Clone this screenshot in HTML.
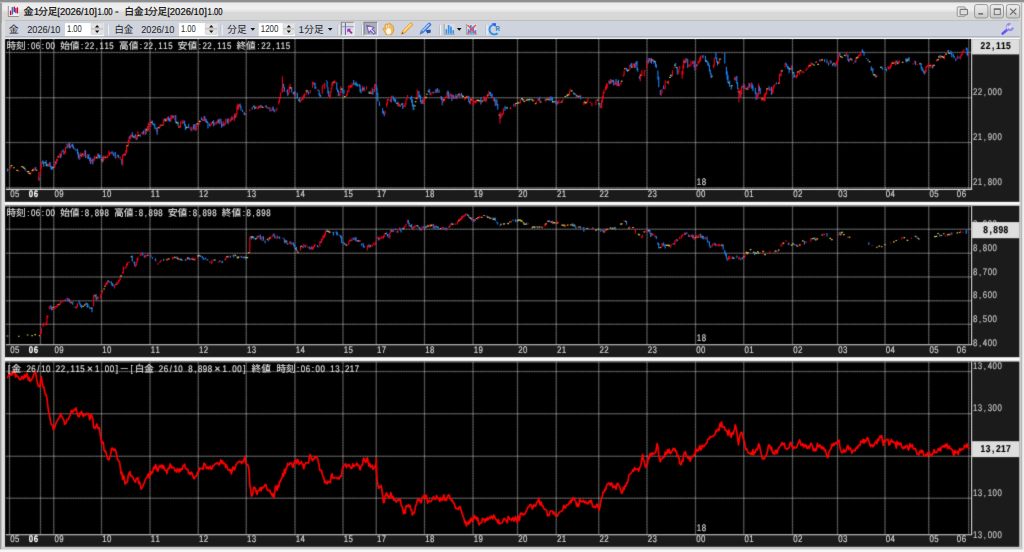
<!DOCTYPE html>
<html lang="ja"><head><meta charset="utf-8"><title>金1分足[2026/10]1.00 - 白金1分足[2026/10]1.00</title>
<style>
html,body{margin:0;padding:0;background:#dcdcdc;overflow:hidden}
body{width:1024px;height:552px;font-family:"Liberation Sans",sans-serif}
svg text{white-space:pre;text-rendering:geometricPrecision}
.cr{stroke:#ff0018;stroke-width:1.05;fill:none}.cb{stroke:#1682f6;stroke-width:1.1;fill:none}.cy{stroke:#d9c850;stroke-width:1.15;fill:none}
</style></head><body>
<svg width="1024" height="552" viewBox="0 0 1024 552" style="display:block">
<defs>
<linearGradient id="gt" x1="0" y1="0" x2="0" y2="1"><stop offset="0" stop-color="#e9e9e9"/><stop offset="0.35" stop-color="#f0f0f0"/><stop offset="0.5" stop-color="#e4e4e4"/><stop offset="0.56" stop-color="#d9d9d9"/><stop offset="1" stop-color="#d6d6d6"/></linearGradient>
<linearGradient id="gb" x1="0" y1="0" x2="0" y2="1"><stop offset="0" stop-color="#efefef"/><stop offset="0.5" stop-color="#dedede"/><stop offset="1" stop-color="#c6c6c6"/></linearGradient>
<linearGradient id="gtop" x1="0" y1="0" x2="0" y2="1"><stop offset="0" stop-color="#8c8e92"/><stop offset="0.55" stop-color="#8f9195"/><stop offset="1" stop-color="#d8d8d8"/></linearGradient>
<linearGradient id="gsep" x1="0" y1="0" x2="0" y2="1"><stop offset="0" stop-color="#f4f4f4"/><stop offset="0.45" stop-color="#ffffff"/><stop offset="1" stop-color="#cfcfcf"/></linearGradient>
<filter id="soft" x="0" y="0" width="100%" height="100%" filterUnits="userSpaceOnUse" color-interpolation-filters="sRGB"><feConvolveMatrix order="3" kernelMatrix="0.015 0.075 0.015 0.075 0.64 0.075 0.015 0.075 0.015" divisor="1" edgeMode="duplicate" preserveAlpha="false"/></filter>
</defs>
<rect x="0" y="0" width="1024" height="552" fill="#dcdcdc"/>
<rect x="0" y="0" width="1.7" height="549.6" fill="#9a9a9a"/>
<rect x="1.7" y="2" width="3.3" height="547.6" fill="#dedede"/>
<rect x="1019.2" y="2" width="1.4" height="547.6" fill="#dcdcdc"/>
<rect x="1020.6" y="2" width="1.8" height="547.6" fill="#b8b8b8"/>
<rect x="1022.4" y="2" width="1.6" height="550" fill="#efefef"/>
<rect x="1.7" y="546.8" width="1020.7" height="2.8" fill="#cdcdcd"/>
<rect x="0" y="549.6" width="1024" height="2.4" fill="#f6f6f6"/>
<rect x="2.6" y="2" width="1018" height="18.6" fill="url(#gt)"/>
<rect x="0" y="0" width="1024" height="2.9" fill="url(#gtop)"/>
<rect x="0" y="2.9" width="1.7" height="20" fill="#9a9a9a"/>
<rect x="5" y="20.2" width="1014.6" height="1" fill="#b9b9b9"/>
<rect x="5" y="21.1" width="1014.6" height="15.6" fill="#cfd3dd"/>
<rect x="5" y="36.4" width="1014.6" height="1.25" fill="#98a0b2"/>
<rect x="5" y="37.65" width="1014.6" height="1.75" fill="#ffffff"/>
<rect x="8.4" y="6" width="10.4" height="10.4" fill="#efefef"/>
<path d="M8.3 5.9V16.5H18.8" fill="none" stroke="#8a8a8a" stroke-width="0.9"/>
<rect x="9.85" y="10.4" width="1.5" height="4.8" rx="0.6" fill="#f0001e"/>
<rect x="11.65" y="7" width="1.5" height="7.6" rx="0.6" fill="#1478e6"/>
<rect x="13.55" y="6.4" width="1.5" height="5.8" rx="0.6" fill="#f0001e"/>
<rect x="15.05" y="8" width="1.5" height="5.2" rx="0.6" fill="#1478e6"/>
<rect x="16.65" y="7.2" width="1.5" height="6.4" rx="0.6" fill="#f0001e"/>
<text x="23.5" y="14.7" font-family="'Liberation Sans','Noto Sans CJK JP',sans-serif" font-size="10" fill="#0a0a0a" stroke="#0a0a0a" stroke-width="0.22">金</text>
<text x="33.8" y="14.7" font-family="Liberation Sans, sans-serif" font-size="10" fill="#0a0a0a" stroke="#0a0a0a" stroke-width="0.22">1</text>
<text x="38.2" y="14.7" font-family="'Liberation Sans','Noto Sans CJK JP',sans-serif" font-size="10" fill="#0a0a0a" stroke="#0a0a0a" stroke-width="0.22" textLength="19" lengthAdjust="spacingAndGlyphs">分足</text>
<text x="57.3" y="14.7" font-family="Liberation Sans, sans-serif" font-size="10" fill="#0a0a0a" textLength="39.6" lengthAdjust="spacingAndGlyphs" stroke="#0a0a0a" stroke-width="0.22">[2026/10]</text>
<text x="97.6" y="14.7" font-family="Liberation Sans, sans-serif" font-size="10" fill="#0a0a0a" textLength="15" lengthAdjust="spacingAndGlyphs" stroke="#0a0a0a" stroke-width="0.22">1.00</text>
<text x="114.9" y="14.7" font-family="Liberation Sans, sans-serif" font-size="11" fill="#0a0a0a" stroke="#0a0a0a" stroke-width="0.22">-</text>
<text x="124.6" y="14.7" font-family="'Liberation Sans','Noto Sans CJK JP',sans-serif" font-size="10" fill="#0a0a0a" stroke="#0a0a0a" stroke-width="0.22" textLength="19" lengthAdjust="spacingAndGlyphs">白金</text>
<text x="143.7" y="14.7" font-family="Liberation Sans, sans-serif" font-size="10" fill="#0a0a0a" stroke="#0a0a0a" stroke-width="0.22">1</text>
<text x="147.9" y="14.7" font-family="'Liberation Sans','Noto Sans CJK JP',sans-serif" font-size="10" fill="#0a0a0a" stroke="#0a0a0a" stroke-width="0.22" textLength="19" lengthAdjust="spacingAndGlyphs">分足</text>
<text x="167.2" y="14.7" font-family="Liberation Sans, sans-serif" font-size="10" fill="#0a0a0a" textLength="39.6" lengthAdjust="spacingAndGlyphs" stroke="#0a0a0a" stroke-width="0.22">[2026/10]</text>
<text x="207.6" y="14.7" font-family="Liberation Sans, sans-serif" font-size="10" fill="#0a0a0a" textLength="15" lengthAdjust="spacingAndGlyphs" stroke="#0a0a0a" stroke-width="0.22">1.00</text>
<rect x="957.2" y="6.9" width="8" height="9.4" rx="0.8" fill="#e6e6e6" stroke="#8c8c8c" stroke-width="0.9"/>
<rect x="960.1" y="9.4" width="7.4" height="5.4" rx="0.8" fill="#dcdcdc" stroke="#7d7d7d" stroke-width="1.1"/>
<rect x="974.6" y="4.6" width="13.3" height="13.4" rx="2.2" fill="url(#gb)" stroke="#989898" stroke-width="1"/>
<rect x="990.2" y="4.6" width="13.3" height="13.4" rx="2.2" fill="url(#gb)" stroke="#989898" stroke-width="1"/>
<rect x="1006.4" y="4.6" width="13.3" height="13.4" rx="2.2" fill="url(#gb)" stroke="#989898" stroke-width="1"/>
<rect x="978.3" y="13.1" width="4.8" height="1.5" fill="#686868"/>
<rect x="994.3" y="9" width="6" height="5.6" fill="none" stroke="#777" stroke-width="1"/>
<rect x="993.9" y="8.4" width="6.8" height="1.6" fill="#777"/>
<path d="M1010.2 8.6L1016.3 14.6M1016.3 8.6L1010.2 14.6" stroke="#6a6a6a" stroke-width="1.3" fill="none"/>
<text x="8.7" y="33.4" font-family="'Liberation Sans','Noto Sans CJK JP',sans-serif" font-size="10" fill="#1c1c1c">金</text>
<text x="27.2" y="32.6" font-family="Liberation Sans, sans-serif" font-size="10" fill="#1c1c1c" textLength="33.2" lengthAdjust="spacingAndGlyphs">2026/10</text>
<rect x="65" y="22.7" width="38.7" height="13.4" fill="#ffffff"/>
<rect x="65" y="22.4" width="38.7" height="0.7" fill="#c3c8d2"/>
<text x="67" y="31.7" font-family="Liberation Sans, sans-serif" font-size="10" fill="#2a2a2a" textLength="14.8" lengthAdjust="spacingAndGlyphs">1.00</text>
<rect x="91.2" y="23.2" width="11.9" height="11.2" rx="1" fill="#e3e3e3" stroke="#c8c8c8" stroke-width="0.6"/>
<rect x="91.2" y="28.5" width="11.9" height="0.8" fill="#a8a8a8"/>
<path d="M94.95 27.4L97.15 24.9L99.35 27.4Z" fill="#111"/>
<path d="M94.95 30.6L97.15 33.1L99.35 30.6Z" fill="#111"/>
<rect x="106.8" y="24.8" width="0.9" height="10.4" fill="#b4b9c6"/>
<rect x="107.7" y="24.8" width="1.3" height="10.4" fill="#eef0f5"/>
<text x="114.4" y="33.4" font-family="'Liberation Sans','Noto Sans CJK JP',sans-serif" font-size="10" fill="#1c1c1c" textLength="18.8" lengthAdjust="spacingAndGlyphs">白金</text>
<text x="141.2" y="32.6" font-family="Liberation Sans, sans-serif" font-size="10" fill="#1c1c1c" textLength="33.2" lengthAdjust="spacingAndGlyphs">2026/10</text>
<rect x="179" y="22.7" width="38.8" height="13.4" fill="#ffffff"/>
<rect x="179" y="22.4" width="38.8" height="0.7" fill="#c3c8d2"/>
<text x="181" y="31.7" font-family="Liberation Sans, sans-serif" font-size="10" fill="#2a2a2a" textLength="14.8" lengthAdjust="spacingAndGlyphs">1.00</text>
<rect x="205.3" y="23.2" width="11.9" height="11.2" rx="1" fill="#e3e3e3" stroke="#c8c8c8" stroke-width="0.6"/>
<rect x="205.3" y="28.5" width="11.9" height="0.8" fill="#a8a8a8"/>
<path d="M209.05 27.4L211.25 24.9L213.45 27.4Z" fill="#111"/>
<path d="M209.05 30.6L211.25 33.1L213.45 30.6Z" fill="#111"/>
<rect x="220.6" y="24.8" width="0.9" height="10.4" fill="#b4b9c6"/>
<rect x="221.5" y="24.8" width="1.3" height="10.4" fill="#eef0f5"/>
<text x="227.3" y="33.4" font-family="'Liberation Sans','Noto Sans CJK JP',sans-serif" font-size="10" fill="#1c1c1c" textLength="19.2" lengthAdjust="spacingAndGlyphs">分足</text>
<path d="M250.5 28L255.1 28L252.8 30.7Z" fill="#111"/>
<rect x="258.8" y="22.7" width="36.2" height="13.4" fill="#ffffff"/>
<rect x="258.8" y="22.4" width="36.2" height="0.7" fill="#c3c8d2"/>
<text x="260.8" y="31.7" font-family="Liberation Sans, sans-serif" font-size="10" fill="#2a2a2a" textLength="17.6" lengthAdjust="spacingAndGlyphs">1200</text>
<rect x="283.2" y="23.2" width="11.2" height="11.2" rx="1" fill="#e3e3e3" stroke="#c8c8c8" stroke-width="0.6"/>
<rect x="283.2" y="28.5" width="11.2" height="0.8" fill="#a8a8a8"/>
<path d="M286.6 27.4L288.8 24.9L291 27.4Z" fill="#111"/>
<path d="M286.6 30.6L288.8 33.1L291 30.6Z" fill="#111"/>
<text x="298.6" y="32.6" font-family="Liberation Sans, sans-serif" font-size="10" fill="#1c1c1c">1</text>
<text x="304.3" y="33.4" font-family="'Liberation Sans','Noto Sans CJK JP',sans-serif" font-size="10" fill="#1c1c1c" textLength="19.2" lengthAdjust="spacingAndGlyphs">分足</text>
<path d="M327.9 28L332.5 28L330.2 30.7Z" fill="#111"/>
<rect x="337.6" y="24.8" width="0.9" height="10.4" fill="#b4b9c6"/>
<rect x="338.5" y="24.8" width="1.3" height="10.4" fill="#eef0f5"/>
<rect x="341.3" y="22.2" width="12.8" height="13.1" fill="#dddddd"/>
<path d="M341.3 35.3V22.2H354.1" fill="none" stroke="#868686" stroke-width="1.1"/>
<path d="M341.3 35.3H354.1V22.2" fill="none" stroke="#f4f4f4" stroke-width="1.1"/>
<rect x="342" y="26.1" width="11.8" height="1.1" fill="#9a9ade"/>
<rect x="344.9" y="23" width="1.1" height="12" fill="#6c6cc4"/>
<path d="M347.3 28.7H351.2L349.9 30L352.6 32.7L351.3 34L348.6 31.3L347.3 32.6Z" fill="#a02cb4"/>
<rect x="361" y="24.8" width="0.9" height="10.4" fill="#b4b9c6"/>
<rect x="361.9" y="24.8" width="1.3" height="10.4" fill="#eef0f5"/>
<rect x="364.1" y="22.2" width="13.5" height="13.1" fill="#abafb4"/>
<path d="M364.1 35.3V22.2H377.6" fill="none" stroke="#7e7e7e" stroke-width="1.1"/>
<path d="M364.1 35.3H377.6V22.2" fill="none" stroke="#f2f2f2" stroke-width="1.1"/>
<path d="M366.6 25.2L374.2 27.6L371.9 29.2L375.4 32.7L373.8 34.2L370.4 30.7L368.8 33Z" fill="#ece8fa" stroke="#7a5cc8" stroke-width="1.1" stroke-linejoin="round"/>
<path d="M386 34.6C385.6 33.2 385 32.2 384.4 31.4C383.6 30.6 382.8 29.8 383 28.8C383.2 27.8 384.4 27.6 385.4 28.6C385 27.2 384.8 25.6 385.2 24.6C385.6 23.6 387 23.6 387.6 24.8C388 23.4 388.8 23 389.8 23.2C390.6 23.4 391 24 391.2 24.8C392 24.6 392.8 25.2 393.2 26.2C393.8 27.8 394 29.6 393.6 31.2C393.2 32.6 392.4 33.6 391.4 34.6Z" fill="#ecbb6a" stroke="#d69a3c" stroke-width="0.9" stroke-linejoin="round"/>
<ellipse cx="388.6" cy="31.4" rx="2.5" ry="3.1" fill="#fff5df"/>
<path d="M386.4 25.4V28M388.6 24.8V27.4" stroke="#fbe3b8" stroke-width="0.9" fill="none"/>
<path d="M401.4 34.2L402.6 30.6L410.4 22.9C411.2 22.2 413.4 24.2 412.7 25.1L405 32.9Z" fill="#f2b44e" stroke="#e09a36" stroke-width="0.6"/>
<path d="M403.6 31.4L411 24.1" stroke="#fde6b0" stroke-width="1.1" fill="none"/>
<path d="M401.4 34.2L402.2 31.9L403.8 33.4Z" fill="#8a5a1e"/>
<path d="M425.4 30.2L430.6 29.4L430.8 32.4L427.4 33.6Z" fill="#2452a4"/>
<path d="M419.9 34.2L421.4 30.4L428.6 23C429.5 22.2 431.6 24.3 430.9 25.2L423.6 32.6Z" fill="#4a84e4" stroke="#3a72d4" stroke-width="0.6"/>
<path d="M422.4 30.9L429.2 24.2" stroke="#b4cffa" stroke-width="1.2" fill="none"/>
<rect x="439" y="24.8" width="0.9" height="10.4" fill="#b4b9c6"/>
<rect x="439.9" y="24.8" width="1.3" height="10.4" fill="#eef0f5"/>
<rect x="443.9" y="24" width="10.8" height="10.2" fill="#dcdcdc"/>
<path d="M444.2 24V34.3H454.7" fill="none" stroke="#9c9c9c" stroke-width="0.9"/>
<rect x="445.5" y="29.2" width="1.7" height="4.5" fill="#2f90f2"/>
<rect x="447.8" y="25" width="1.7" height="8.7" fill="#2f90f2"/>
<rect x="450.1" y="26.6" width="1.7" height="7.1" fill="#2f90f2"/>
<rect x="452.4" y="30.2" width="1.7" height="3.5" fill="#2f90f2"/>
<path d="M456.9 28L461.5 28L459.2 30.7Z" fill="#111"/>
<rect x="466.1" y="24" width="10.8" height="10.2" fill="#dcdcdc"/>
<path d="M466.4 24V34.3H476.9" fill="none" stroke="#9c9c9c" stroke-width="0.9"/>
<rect x="467.7" y="29.2" width="1.7" height="4.5" fill="#2f90f2"/>
<rect x="470" y="25" width="1.7" height="8.7" fill="#2f90f2"/>
<rect x="472.3" y="26.6" width="1.7" height="7.1" fill="#2f90f2"/>
<rect x="474.6" y="30.2" width="1.7" height="3.5" fill="#2f90f2"/>
<path d="M467.5 25L475.9 33.6M475.9 25L467.5 33.6" stroke="#f04658" stroke-width="1.3" fill="none"/>
<rect x="485.4" y="24.8" width="0.9" height="10.4" fill="#b4b9c6"/>
<rect x="486.3" y="24.8" width="1.3" height="10.4" fill="#eef0f5"/>
<path d="M497.6 33.2A4.9 4.9 0 1 1 494.2 24.6" fill="none" stroke="#2292ea" stroke-width="1.8"/>
<path d="M491.8 23.2L496.2 23.2L495.4 27Z" fill="#2456f0"/>
<text x="495.6" y="31.4" font-family="Liberation Sans, sans-serif" font-size="7.2" font-weight="bold" fill="#2080d4" textLength="4.4" lengthAdjust="spacingAndGlyphs">R</text>
<path d="M1002.7 33.6L1007.2 29.7" stroke="#6a5af0" stroke-width="2.7" stroke-linecap="round" fill="none"/>
<circle cx="1009.9" cy="27" r="1.6" fill="#e4e0f8"/>
<path d="M1010.4 24.05A3 3 0 1 0 1012.85 27.5" stroke="#988ce4" stroke-width="2.3" fill="none"/>
<path d="M1007.4 25.6A3 3 0 0 0 1007.6 28.6" stroke="#ece8fc" stroke-width="1.1" fill="none"/>
<g filter="url(#soft)">
<rect x="5" y="39.1" width="1014.3" height="162.8" fill="#1b1b1b"/>
<rect x="5.9" y="39.1" width="965.3" height="150.2" fill="#000"/>
<g stroke="#fff" stroke-opacity="0.2" stroke-width="1.5" fill="none">
<line x1="9.5" y1="39.1" x2="9.5" y2="189.3"/>
<line x1="40.5" y1="39.1" x2="40.5" y2="189.3"/>
<line x1="53.75" y1="39.1" x2="53.75" y2="189.3"/>
<line x1="101.5" y1="39.1" x2="101.5" y2="189.3"/>
<line x1="150" y1="39.1" x2="150" y2="189.3"/>
<line x1="198.25" y1="39.1" x2="198.25" y2="189.3"/>
<line x1="246.25" y1="39.1" x2="246.25" y2="189.3"/>
<line x1="295" y1="39.1" x2="295" y2="189.3"/>
<line x1="343" y1="39.1" x2="343" y2="189.3"/>
<line x1="376.25" y1="39.1" x2="376.25" y2="189.3"/>
<line x1="424.5" y1="39.1" x2="424.5" y2="189.3"/>
<line x1="473" y1="39.1" x2="473" y2="189.3"/>
<line x1="517.5" y1="39.1" x2="517.5" y2="189.3"/>
<line x1="556.25" y1="39.1" x2="556.25" y2="189.3"/>
<line x1="598.75" y1="39.1" x2="598.75" y2="189.3"/>
<line x1="647" y1="39.1" x2="647" y2="189.3"/>
<line x1="695.5" y1="39.1" x2="695.5" y2="189.3"/>
<line x1="743.75" y1="39.1" x2="743.75" y2="189.3"/>
<line x1="792.5" y1="39.1" x2="792.5" y2="189.3"/>
<line x1="837.5" y1="39.1" x2="837.5" y2="189.3"/>
<line x1="885" y1="39.1" x2="885" y2="189.3"/>
<line x1="928.75" y1="39.1" x2="928.75" y2="189.3"/>
<line x1="968.75" y1="39.1" x2="968.75" y2="189.3"/>
<line x1="5.9" y1="52.4" x2="971.2" y2="52.4"/>
<line x1="5.9" y1="97.7" x2="971.2" y2="97.7"/>
<line x1="5.9" y1="142.6" x2="971.2" y2="142.6"/>
<line x1="5.9" y1="187.8" x2="971.2" y2="187.8"/>
</g>
<g stroke="#fff" stroke-opacity="0.3" stroke-width="1.0" stroke-dasharray="0.82 0.82" fill="none">
<line x1="9.5" y1="39.1" x2="9.5" y2="189.3"/>
<line x1="40.5" y1="39.1" x2="40.5" y2="189.3"/>
<line x1="53.75" y1="39.1" x2="53.75" y2="189.3"/>
<line x1="101.5" y1="39.1" x2="101.5" y2="189.3"/>
<line x1="150" y1="39.1" x2="150" y2="189.3"/>
<line x1="198.25" y1="39.1" x2="198.25" y2="189.3"/>
<line x1="246.25" y1="39.1" x2="246.25" y2="189.3"/>
<line x1="295" y1="39.1" x2="295" y2="189.3"/>
<line x1="343" y1="39.1" x2="343" y2="189.3"/>
<line x1="376.25" y1="39.1" x2="376.25" y2="189.3"/>
<line x1="424.5" y1="39.1" x2="424.5" y2="189.3"/>
<line x1="473" y1="39.1" x2="473" y2="189.3"/>
<line x1="517.5" y1="39.1" x2="517.5" y2="189.3"/>
<line x1="556.25" y1="39.1" x2="556.25" y2="189.3"/>
<line x1="598.75" y1="39.1" x2="598.75" y2="189.3"/>
<line x1="647" y1="39.1" x2="647" y2="189.3"/>
<line x1="695.5" y1="39.1" x2="695.5" y2="189.3"/>
<line x1="743.75" y1="39.1" x2="743.75" y2="189.3"/>
<line x1="792.5" y1="39.1" x2="792.5" y2="189.3"/>
<line x1="837.5" y1="39.1" x2="837.5" y2="189.3"/>
<line x1="885" y1="39.1" x2="885" y2="189.3"/>
<line x1="928.75" y1="39.1" x2="928.75" y2="189.3"/>
<line x1="968.75" y1="39.1" x2="968.75" y2="189.3"/>
<line x1="5.9" y1="52.4" x2="971.2" y2="52.4"/>
<line x1="5.9" y1="97.7" x2="971.2" y2="97.7"/>
<line x1="5.9" y1="142.6" x2="971.2" y2="142.6"/>
<line x1="5.9" y1="187.8" x2="971.2" y2="187.8"/>
</g>
<path class="cb" d="M7.5 168.53V171.39"/>
<path class="cr" d="M8.3 169.32V170.37M10.72 166.01V168.66"/>
<path class="cy" d="M10.72 165.64h1.6M13.14 167.7h1.6M16.36 170.43h1.6"/>
<path class="cr" d="M18.77 170.21V171.73"/>
<path class="cy" d="M21.19 166.61h1.6M22.8 167.32h1.6M23.61 168.52h1.6"/>
<path class="cb" d="M25.21 168.52V170.86"/>
<path class="cr" d="M26.02 169.48V170.32"/>
<path class="cy" d="M26.82 171.62h1.6M27.63 171.63h1.6M28.44 173.36h1.6M29.24 173.64h1.6"/>
<path class="cr" d="M30.85 171.94V174.13"/>
<path class="cy" d="M31.65 170.58h1.6M32.46 169.69h1.6"/>
<path class="cr" d="M34.06 167.56V170.87"/>
<path class="cb" d="M35.67 167.03V169.99"/>
<path class="cy" d="M35.68 170.25h1.6"/>
<path class="cb" d="M38.9 177.16V180.37"/>
<path class="cr" d="M40.51 166.68V174.15M41.31 162.78V168.72M42.12 160.94V163.8"/>
<path class="cb" d="M42.92 160.6V163.73M43.73 161.55V166.66"/>
<path class="cy" d="M44.54 162.78h1.6"/>
<path class="cb" d="M46.14 160.29V166.22"/>
<path class="cy" d="M46.15 165.11h1.6"/>
<path class="cb" d="M47.75 163.83V166.61"/>
<path class="cr" d="M48.55 164.04V166.34M49.36 162.57V166.69"/>
<path class="cb" d="M50.16 162.09V167.06M50.97 166.06V169.3M51.78 166.46V170.11M52.58 166.61V168.92"/>
<path class="cy" d="M52.59 167.38h1.6"/>
<path class="cr" d="M54.19 164.79V167.38M55 160.9V167.53"/>
<path class="cb" d="M55.8 161.22V164.45"/>
<path class="cr" d="M56.61 158.6V163.53M57.41 159.05V161.07"/>
<path class="cy" d="M57.42 156.81h1.6"/>
<path class="cr" d="M59.02 155.17V158.33M59.83 153.26V155.67"/>
<path class="cb" d="M60.63 154.06V158.03"/>
<path class="cr" d="M61.44 150.66V156.96"/>
<path class="cb" d="M63.05 149.17V151.99M63.85 151.26V154.5"/>
<path class="cr" d="M64.66 150.85V154.27M65.46 147.11V152.89"/>
<path class="cb" d="M67.07 143.67V148.45"/>
<path class="cr" d="M67.88 144.81V147.63M68.68 143.6V147.33"/>
<path class="cb" d="M69.49 142.45V148.19M70.29 146.31V148.16"/>
<path class="cr" d="M71.09 144.6V146.99"/>
<path class="cb" d="M71.9 144.61V146.19M72.7 143.85V147.45M73.51 145.72V149.06"/>
<path class="cr" d="M74.31 148.56V149.41"/>
<path class="cb" d="M75.12 148.51V149.18M75.92 149.16V151.12M77.54 148.73V154.3M78.34 152.33V158.32M79.15 154.59V159.7"/>
<path class="cr" d="M79.95 154.39V159.19M80.76 152.54V156.05"/>
<path class="cb" d="M81.56 154.97V157.1"/>
<path class="cy" d="M81.57 154.31h1.6"/>
<path class="cr" d="M83.17 153.08V156.82M84.78 150.33V156.36"/>
<path class="cb" d="M85.59 150.23V157.92"/>
<path class="cr" d="M87.2 154.33V157.69"/>
<path class="cb" d="M88 155.62V159.08M88.81 154.08V158.93M89.61 158.45V160.92M90.42 157.36V164.02"/>
<path class="cr" d="M91.22 160.1V163.28M92.03 158.78V161.08"/>
<path class="cb" d="M92.83 158.39V164.44"/>
<path class="cr" d="M93.64 158.96V161.46M94.44 155.85V160.61"/>
<path class="cb" d="M96.05 156.49V159.05"/>
<path class="cy" d="M96.06 157.48h1.6"/>
<path class="cr" d="M97.66 153.56V158.68"/>
<path class="cb" d="M98.47 153.66V157.55M99.27 154.78V158.41M100.08 155.17V158.32"/>
<path class="cy" d="M100.89 159.95h1.6"/>
<path class="cb" d="M102.49 157.11V162.37"/>
<path class="cr" d="M103.3 155.7V161.8M104.1 155.56V159.65"/>
<path class="cy" d="M104.91 157.29h1.6"/>
<path class="cr" d="M107.32 155.16V158.44M108.93 150.75V156.43M109.73 152.18V155.25M110.54 152.65V153.69"/>
<path class="cb" d="M111.35 152.23V153.35M112.15 151.17V154.36"/>
<path class="cr" d="M112.96 153.52V154.52"/>
<path class="cb" d="M113.76 152.39V156.24M115.37 152.11V158.49"/>
<path class="cr" d="M116.18 156.35V157.94"/>
<path class="cb" d="M117.79 154.5V156.48M118.59 154.98V157.99"/>
<path class="cr" d="M120.2 156.84V159.84"/>
<path class="cb" d="M121.81 158.88V164.17"/>
<path class="cr" d="M122.62 154.78V165.77M123.42 154.01V155.93"/>
<path class="cb" d="M124.23 153.59V155.62"/>
<path class="cr" d="M125.03 153.27V156.12M125.84 150V154.95M126.64 145.03V152.4"/>
<path class="cy" d="M126.65 145.73h1.6"/>
<path class="cr" d="M128.25 140.12V146.02M129.06 136.71V142.61"/>
<path class="cb" d="M129.86 135.7V138.55"/>
<path class="cr" d="M130.67 134.65V139.28M131.47 134.31V136.51"/>
<path class="cb" d="M132.28 132.14V137.14M133.08 135.2V137.42"/>
<path class="cy" d="M133.08 136.97h1.6"/>
<path class="cr" d="M134.69 135.42V138.68"/>
<path class="cb" d="M135.5 134.13V137.61M136.3 137.12V139.98"/>
<path class="cr" d="M137.11 134.84V139.74M137.91 131.32V137.28"/>
<path class="cy" d="M137.91 135.46h1.6"/>
<path class="cb" d="M140.33 134.36V136.77"/>
<path class="cr" d="M141.94 131.95V133.66M142.74 131.84V134.8"/>
<path class="cb" d="M143.55 130.57V134.31"/>
<path class="cr" d="M145.16 128.59V135.06"/>
<path class="cb" d="M145.96 128.61V134.13"/>
<path class="cy" d="M145.97 129.59h1.6"/>
<path class="cr" d="M147.57 125.97V131.84M148.38 122.24V130.88M149.18 123.57V124.54"/>
<path class="cb" d="M149.99 124.24V125.56"/>
<path class="cr" d="M150.79 120.18V126.82"/>
<path class="cy" d="M150.79 122.44h1.6"/>
<path class="cb" d="M152.4 120.45V124.53M153.21 123.6V124.79M154.01 123.32V125.66M154.81 124.04V128.7M155.62 127.82V128.91"/>
<path class="cr" d="M156.43 127.73V131.72"/>
<path class="cb" d="M157.23 127.25V134.71"/>
<path class="cy" d="M158.04 127.59h1.6"/>
<path class="cr" d="M159.65 125.57V128.62M160.45 124.3V126.82"/>
<path class="cy" d="M161.26 125.29h1.6"/>
<path class="cr" d="M163.67 119.08V125.4M164.48 118.48V121.08"/>
<path class="cb" d="M165.28 118.2V121.66"/>
<path class="cy" d="M165.28 120.09h1.6"/>
<path class="cr" d="M166.89 118.07V121.53M167.7 116.7V119.6"/>
<path class="cb" d="M168.5 116.54V120.5M169.31 118.27V121.42M170.11 118.34V121.83"/>
<path class="cr" d="M170.92 115.52V121.62M171.72 114.89V119.11M172.53 115.18V118.14"/>
<path class="cb" d="M173.33 115.54V118.02"/>
<path class="cr" d="M174.94 115.58V120.2"/>
<path class="cb" d="M175.75 115.06V122.73"/>
<path class="cy" d="M175.75 122.44h1.6M176.56 123.09h1.6"/>
<path class="cb" d="M178.16 121.67V126.03"/>
<path class="cy" d="M178.16 127.04h1.6"/>
<path class="cr" d="M179.77 125.77V128M180.58 121.59V127.77M182.19 120.32V123.6"/>
<path class="cb" d="M182.99 121.52V123.7"/>
<path class="cr" d="M183.8 120.28V122.95"/>
<path class="cb" d="M184.6 120.67V125.86M185.41 124.25V129.93M186.21 126.12V128.7"/>
<path class="cy" d="M186.22 127.47h1.6"/>
<path class="cb" d="M188.62 123.91V128.11"/>
<path class="cr" d="M189.43 127.74V128.5M190.24 127.28V128.1"/>
<path class="cb" d="M191.04 127.79V130.83"/>
<path class="cr" d="M191.84 126.66V131.58"/>
<path class="cb" d="M193.46 124.41V129.55"/>
<path class="cr" d="M194.26 123.92V128.66"/>
<path class="cb" d="M195.06 124.01V130.54"/>
<path class="cr" d="M195.87 127.66V130.92M196.68 123.62V129.61"/>
<path class="cy" d="M196.68 123.73h1.6"/>
<path class="cb" d="M198.29 123.37V125.47"/>
<path class="cr" d="M199.09 120.27V125.1"/>
<path class="cy" d="M199.09 121.36h1.6"/>
<path class="cb" d="M201.51 117.18V120.04M202.31 119.07V120.46"/>
<path class="cr" d="M203.12 119.78V121.17M203.92 116.35V120.91"/>
<path class="cb" d="M204.73 116.05V121.01"/>
<path class="cr" d="M205.53 118.06V121.88"/>
<path class="cb" d="M206.34 119.16V123.04M207.14 121.1V122.98M207.95 122.26V128.41M209.56 123.45V126.28"/>
<path class="cr" d="M210.36 124.4V126.6M211.17 123.2V124.97M211.97 121.67V124.4"/>
<path class="cy" d="M211.97 122.35h1.6"/>
<path class="cb" d="M213.58 120.28V126.27"/>
<path class="cr" d="M214.39 122.89V125.31"/>
<path class="cb" d="M216 121.74V124.59"/>
<path class="cr" d="M216.8 121.55V124.11M217.61 119.64V122.71"/>
<path class="cb" d="M218.41 119.26V123.02M219.22 119.45V124"/>
<path class="cr" d="M220.02 118.55V124.29"/>
<path class="cb" d="M220.83 118.69V121.67M221.63 121.5V127.63M222.44 124.26V125.76"/>
<path class="cr" d="M223.24 121.27V126.58"/>
<path class="cb" d="M224.05 123.42V126.03"/>
<path class="cr" d="M224.85 122.8V125.34M225.66 118.67V124.29"/>
<path class="cb" d="M227.27 118.77V122.72M228.07 118.7V124.22"/>
<path class="cr" d="M228.88 118.34V122.65M230.49 119.23V121.75M231.29 116.44V120.89"/>
<path class="cb" d="M232.1 117.35V119.97"/>
<path class="cr" d="M232.9 116.16V119.58M234.51 113.84V120.9"/>
<path class="cb" d="M235.32 114.62V118.01"/>
<path class="cr" d="M236.12 112.88V117.5M236.93 106.24V114.49M237.73 103.85V109.69M238.54 104.46V109.84M239.34 104.25V106.61"/>
<path class="cb" d="M240.15 103.51V107.58M240.95 106.12V110.49M242.56 109.79V112.06M244.17 111.88V114.9M244.98 113.31V114.94"/>
<path class="cr" d="M245.78 114.15V115.38M246.59 113.43V115.08M249.81 109.19V111.36"/>
<path class="cb" d="M252.22 107.11V109.54"/>
<path class="cy" d="M253.03 106.22h1.6"/>
<path class="cb" d="M254.64 105.72V109.17"/>
<path class="cy" d="M254.64 107.86h1.6"/>
<path class="cr" d="M256.25 106.47V108.29M257.86 106.72V109.14M258.66 105.59V108.71"/>
<path class="cb" d="M259.47 105.94V107.61"/>
<path class="cr" d="M260.27 105.45V108.15"/>
<path class="cb" d="M261.08 104.74V106.69M261.88 106.19V107.76"/>
<path class="cy" d="M261.88 107.28h1.6"/>
<path class="cr" d="M263.49 106.89V107.44M265.1 106.2V107.18"/>
<path class="cb" d="M265.91 105.1V106.92M266.71 106.58V108.36"/>
<path class="cr" d="M267.52 107.44V108.64M268.32 107.18V108.64M269.12 107.06V107.71"/>
<path class="cb" d="M269.93 107.45V111.59"/>
<path class="cr" d="M271.54 109.45V111.35M272.35 107.16V110.63"/>
<path class="cb" d="M273.15 106.6V109.92M273.96 108.98V111.5M274.76 110.49V112.31"/>
<path class="cr" d="M276.37 108.74V111.06M277.18 107.83V108.93M278.79 100.83V104.39M279.59 96.95V102.43M280.4 92.41V98.86M282 88.7V92.83M282.81 84.05V92.01"/>
<path class="cb" d="M283.62 83.8V87.82M284.42 87.15V91.67"/>
<path class="cr" d="M286.84 90.13V92.46"/>
<path class="cb" d="M287.64 89.34V95.81"/>
<path class="cr" d="M288.44 92.62V94.95M289.25 86.13V92.68M290.06 83.87V89.27"/>
<path class="cy" d="M290.06 87.92h1.6"/>
<path class="cb" d="M291.67 87.29V92.71M293.28 92.91V94.51"/>
<path class="cy" d="M293.28 92.85h1.6"/>
<path class="cb" d="M294.88 91.05V96.22"/>
<path class="cr" d="M295.69 92.57V96.4"/>
<path class="cb" d="M297.3 92.85V98.76"/>
<path class="cy" d="M298.11 100.08h1.6"/>
<path class="cb" d="M299.72 97.83V102.61"/>
<path class="cr" d="M300.52 100.44V101.94M301.33 99.45V101.06M302.13 98.33V99.97M302.94 96.22V100.1M303.74 94.45V98.23M304.55 93.62V97.02M306.16 89.74V94.81"/>
<path class="cy" d="M306.16 90.83h1.6"/>
<path class="cb" d="M307.77 90.71V92.65M308.57 91.78V94.46"/>
<path class="cr" d="M310.18 89.89V93.26M312.6 81.38V87.82M313.4 82V84.12"/>
<path class="cb" d="M314.21 83.01V85.02M315.01 82.86V88.97M315.81 86.77V88.4"/>
<path class="cr" d="M317.43 89.71V90.75M318.23 89.24V90.3"/>
<path class="cb" d="M319.04 89.89V95.17M319.84 93.48V96.5M320.65 94.9V97.11"/>
<path class="cr" d="M322.25 85.92V94.05M323.06 84.35V86.84M324.67 82.79V89.1"/>
<path class="cb" d="M326.28 80.14V81.11M327.09 80.89V87.33M327.89 86.92V93.54M328.69 90.85V96.4"/>
<path class="cr" d="M329.5 94.6V98.38M330.31 91.81V97.17M331.11 87.96V92.72M331.92 82.63V88.65M332.72 82.32V85.86"/>
<path class="cy" d="M332.73 82.18h1.6"/>
<path class="cr" d="M334.33 80.22V83.61M335.14 80.93V83.31"/>
<path class="cb" d="M336.75 82.27V89.56M337.55 88.87V92.03M338.36 90.2V95.88"/>
<path class="cr" d="M339.16 94.53V95.98M339.97 92.02V96.24M340.77 86.34V93.09"/>
<path class="cy" d="M340.78 89.15h1.6"/>
<path class="cb" d="M342.38 87.99V92.85M343.99 89.8V93.76"/>
<path class="cy" d="M344 96.62h1.6"/>
<path class="cr" d="M346.41 93.89V96.49M347.21 90.21V95.48M348.82 85.08V92.14M349.62 86.62V87.15M350.43 85.01V87.95M351.24 85.13V87.39M352.04 82.65V87.36"/>
<path class="cb" d="M353.65 80.06V85.14"/>
<path class="cy" d="M354.46 83.82h1.6"/>
<path class="cb" d="M356.06 81.57V86M356.87 83.58V85.85M357.68 84.32V86.51M359.29 83.96V86.69M360.09 84.7V92.04M360.9 88.81V93.36"/>
<path class="cr" d="M362.5 85.95V91.79"/>
<path class="cy" d="M362.51 88.97h1.6"/>
<path class="cb" d="M364.12 86.79V90.7"/>
<path class="cr" d="M364.92 89.83V91.2M366.53 86.41V89.5"/>
<path class="cb" d="M368.95 91.14V93.8"/>
<path class="cy" d="M368.95 93.11h1.6"/>
<path class="cr" d="M370.56 90.78V93.29"/>
<path class="cy" d="M370.56 93.11h1.6"/>
<path class="cr" d="M372.17 87.51V94.13"/>
<path class="cb" d="M372.97 89.04V94.75"/>
<path class="cr" d="M374.58 84.35V91.96M375.39 83.82V86.12"/>
<path class="cb" d="M376.19 84.63V89.96M377 87.4V95.02M377.8 93.37V101.6M379.41 101.74V105.9"/>
<path class="cr" d="M380.22 104.3V104.53"/>
<path class="cb" d="M382.63 108.18V113.23M383.44 111.08V114.01M384.24 112.55V116.36"/>
<path class="cr" d="M385.05 110.68V113.91M386.66 103.24V107.16M387.46 99.04V104.87M388.27 98.82V100.81M389.88 100.06V100.6"/>
<path class="cb" d="M390.68 99.06V102.03"/>
<path class="cr" d="M391.49 95.76V102.51"/>
<path class="cb" d="M393.1 95.87V98.92M393.9 97.94V101.21M394.71 98.58V101.8M395.51 98.88V102.66"/>
<path class="cy" d="M396.32 103.32h1.6"/>
<path class="cb" d="M397.93 101.57V106.28"/>
<path class="cr" d="M398.73 102.82V106.47M399.54 103.63V106.39"/>
<path class="cb" d="M400.34 104.69V106.64"/>
<path class="cy" d="M401.15 104.17h1.6"/>
<path class="cb" d="M402.76 102.91V108.91"/>
<path class="cr" d="M403.56 105.58V107.18M404.37 105.22V106.4M405.17 103.31V107.22M405.98 99.59V104.53M406.78 98.41V100.08M407.59 95.06V98.56"/>
<path class="cb" d="M410.81 97.07V99.82M411.61 95.73V102.64M412.42 99.79V106.63M413.22 104V109.88M414.03 108.02V109.59"/>
<path class="cy" d="M414.03 105.88h1.6M414.84 101.67h1.6M415.64 98.35h1.6"/>
<path class="cr" d="M417.25 89.47V99.87M418.05 91.74V93.22"/>
<path class="cb" d="M418.86 91.12V97.47M419.66 94.46V97.21M420.47 95.47V102.33M421.27 99.88V104.01"/>
<path class="cr" d="M422.08 100.2V103.54"/>
<path class="cb" d="M422.88 99.16V104.01"/>
<path class="cr" d="M423.69 98.53V104.33M424.49 98.37V101.81M425.3 96.56V99.54"/>
<path class="cy" d="M425.3 97.42h1.6M426.11 94.21h1.6M427.72 91.16h1.6"/>
<path class="cb" d="M429.32 88.7V92.99M430.12 92.62V95.05"/>
<path class="cr" d="M430.93 91.87V95.47M432.54 91.95V93.14"/>
<path class="cb" d="M433.35 91.75V93.4"/>
<path class="cr" d="M434.15 91.85V92.77"/>
<path class="cb" d="M435.76 89.32V92.81"/>
<path class="cr" d="M436.56 88.91V93.32"/>
<path class="cb" d="M437.37 88.08V92.25M438.98 89.46V92.91"/>
<path class="cr" d="M440.59 96.3V98.76"/>
<path class="cb" d="M441.4 96.28V99.99M442.2 97.07V105.2"/>
<path class="cr" d="M443.01 99.55V102.76"/>
<path class="cy" d="M443.01 99.81h1.6"/>
<path class="cr" d="M444.62 97.58V101.6M445.42 96.97V98.24M446.23 95.93V97.41M447.03 91.66V97.58"/>
<path class="cb" d="M447.84 90.51V95.38M448.64 91.85V99.04"/>
<path class="cr" d="M449.45 95.32V98M450.25 93.61V95.67M451.06 93.8V96.55"/>
<path class="cb" d="M451.86 94.65V100.92"/>
<path class="cr" d="M452.67 94.81V98.29"/>
<path class="cb" d="M453.47 94.84V98.79"/>
<path class="cr" d="M454.28 96.36V98.97"/>
<path class="cb" d="M455.89 94.28V99.06M456.69 95.95V98.43"/>
<path class="cr" d="M457.5 95.74V98.61"/>
<path class="cy" d="M457.5 94.81h1.6"/>
<path class="cb" d="M459.11 92.97V96.93"/>
<path class="cr" d="M459.91 93.78V97.23M460.72 94V95.62"/>
<path class="cb" d="M461.52 92.88V96.37M462.33 95.03V98.05"/>
<path class="cy" d="M462.33 96.31h1.6"/>
<path class="cr" d="M464.74 97.2V100.3"/>
<path class="cy" d="M464.75 97.66h1.6"/>
<path class="cr" d="M466.35 95.69V98.13"/>
<path class="cy" d="M466.36 97.19h1.6"/>
<path class="cr" d="M467.96 96.02V98.25"/>
<path class="cb" d="M468.77 95.82V102.37M469.57 100.49V103.44"/>
<path class="cr" d="M470.38 98.55V104.44"/>
<path class="cy" d="M470.38 99.46h1.6"/>
<path class="cr" d="M471.99 97.72V101.24M473.6 100.43V105.47M474.4 101.11V102.78M475.21 100.81V102.58M476.01 99.97V103.6M476.82 99.4V101.78"/>
<path class="cy" d="M476.82 100.32h1.6M477.62 100.37h1.6M478.43 100.8h1.6"/>
<path class="cb" d="M480.04 100.36V101.3M480.84 97.27V104.47"/>
<path class="cr" d="M481.65 100.53V103.08"/>
<path class="cy" d="M481.65 100.97h1.6"/>
<path class="cr" d="M483.26 99.82V101.05M484.06 95.96V100.26"/>
<path class="cb" d="M484.87 98.33V101.17"/>
<path class="cr" d="M485.67 97.01V101.87M486.48 96.66V101.16M487.28 94.8V98.08"/>
<path class="cy" d="M487.29 95.08h1.6"/>
<path class="cr" d="M488.89 90.8V95.99"/>
<path class="cb" d="M489.7 91.9V94.15M490.5 91.91V95.7M491.31 94.6V96.59M492.11 93.81V97.96"/>
<path class="cr" d="M493.72 97.06V101.13"/>
<path class="cb" d="M494.53 97.64V101.62M495.33 99.51V105.94"/>
<path class="cr" d="M496.14 100.33V105.66"/>
<path class="cb" d="M496.94 99.16V105.39M497.75 104.12V109.63"/>
<path class="cy" d="M498.56 115.02h1.6"/>
<path class="cb" d="M500.16 114.09V119.12"/>
<path class="cr" d="M501.77 113.29V117.47M502.58 113.28V115.07M503.38 108.27V114.18"/>
<path class="cb" d="M504.99 105.97V110.7"/>
<path class="cy" d="M505.8 107.9h1.6"/>
<path class="cb" d="M507.41 106.79V108.92"/>
<path class="cr" d="M509.82 108.09V108.66M510.63 107.03V109.18"/>
<path class="cb" d="M513.85 103.64V106.61"/>
<path class="cr" d="M515.46 102.65V106.81"/>
<path class="cy" d="M515.46 103.46h1.6M517.07 102.85h1.6M517.88 102.86h1.6"/>
<path class="cr" d="M520.29 99.36V103.5"/>
<path class="cy" d="M521.1 98.67h1.6M521.9 99.55h1.6"/>
<path class="cb" d="M523.5 99.12V101.1"/>
<path class="cy" d="M523.51 101.51h1.6"/>
<path class="cr" d="M525.12 99.79V101.58"/>
<path class="cy" d="M525.93 100.18h1.6M527.54 99.68h1.6"/>
<path class="cb" d="M529.14 99.25V101.28"/>
<path class="cy" d="M529.15 99.25h1.6"/>
<path class="cb" d="M530.75 98.73V99.57M531.56 99.33V100.22"/>
<path class="cy" d="M531.56 99.72h1.6M532.37 100.7h1.6"/>
<path class="cr" d="M533.97 100.1V101.23"/>
<path class="cy" d="M534.78 103.62h1.6"/>
<path class="cr" d="M536.38 101.61V103.96M538 98.13V100.69M538.8 98.02V100.93"/>
<path class="cb" d="M539.61 96.68V100.95"/>
<path class="cy" d="M539.61 102.02h1.6"/>
<path class="cr" d="M541.22 101.32V102.54"/>
<path class="cb" d="M545.24 98.71V100.63"/>
<path class="cr" d="M546.05 99.27V101.71"/>
<path class="cy" d="M546.05 99.21h1.6"/>
<path class="cr" d="M547.66 97.99V99.63"/>
<path class="cy" d="M547.66 99.44h1.6"/>
<path class="cb" d="M549.26 97.29V101.1"/>
<path class="cr" d="M550.07 96.71V99.95"/>
<path class="cb" d="M550.88 96.24V100.66M551.68 98.27V100.19M552.49 97.07V102.71"/>
<path class="cy" d="M552.49 101.9h1.6M553.3 101.75h1.6"/>
<path class="cb" d="M555.71 100.23V103.66M556.51 101.65V104.81"/>
<path class="cr" d="M557.32 100.73V104.76"/>
<path class="cb" d="M558.12 101.92V103.3"/>
<path class="cr" d="M558.93 99.69V103.73"/>
<path class="cy" d="M560.54 102.17h1.6"/>
<path class="cr" d="M562.14 100V102.75M562.95 99.3V100.9"/>
<path class="cy" d="M564.57 96.47h1.6M566.18 95.73h1.6M566.98 94.93h1.6M567.79 94.59h1.6"/>
<path class="cr" d="M569.39 91.44V95.19M570.2 88.84V92.33"/>
<path class="cy" d="M571.01 90.84h1.6"/>
<path class="cb" d="M573.42 92.2V93.38"/>
<path class="cy" d="M573.42 93.89h1.6"/>
<path class="cb" d="M575.03 92.94V94.55M575.83 94.27V95.26"/>
<path class="cy" d="M575.84 95.83h1.6"/>
<path class="cb" d="M577.44 95.59V98.02"/>
<path class="cr" d="M578.25 95.44V98.11"/>
<path class="cy" d="M578.25 96.51h1.6"/>
<path class="cr" d="M579.86 94.83V96.88"/>
<path class="cb" d="M580.66 95.61V99.24"/>
<path class="cr" d="M583.88 101.81V104.98"/>
<path class="cy" d="M583.89 101.96h1.6M584.69 102.8h1.6M585.5 102.65h1.6"/>
<path class="cr" d="M587.1 100.97V103.15M587.91 98.06V101.62M590.32 101.61V103.3M591.93 102.64V106.15M595.96 100.34V105.02"/>
<path class="cy" d="M596.77 100.04h1.6M598.38 103.93h1.6"/>
<path class="cb" d="M599.98 102.95V107.19"/>
<path class="cr" d="M600.79 106.25V108.09M601.59 100.12V108.39M602.39 95.85V102.74M603.2 91.66V99.02M604 89.61V93.7M605.62 85.91V90.46M606.42 83.43V89.62M607.23 83.38V87.89M608.84 80.13V83.62"/>
<path class="cb" d="M609.64 80.98V84.25"/>
<path class="cr" d="M610.45 79.01V83.65"/>
<path class="cb" d="M611.25 79.44V83.37"/>
<path class="cr" d="M612.06 80.66V82.83"/>
<path class="cy" d="M612.06 80.98h1.6"/>
<path class="cb" d="M613.67 79.83V85.62"/>
<path class="cr" d="M614.47 83.14V84.54M615.28 81.42V84.7"/>
<path class="cb" d="M616.08 79.03V84.53"/>
<path class="cr" d="M616.88 83.26V86.22M617.69 80.78V86.02"/>
<path class="cb" d="M618.5 79.75V86.15"/>
<path class="cr" d="M619.3 83.86V86.33M620.91 81.42V84.78"/>
<path class="cy" d="M620.92 81.14h1.6"/>
<path class="cr" d="M623.33 74.51V76.46M624.13 70.52V75.61"/>
<path class="cy" d="M624.14 68.57h1.6"/>
<path class="cr" d="M625.74 67.63V69.55"/>
<path class="cb" d="M626.55 68.01V70.47M627.35 69.29V71.94"/>
<path class="cy" d="M627.36 70.44h1.6"/>
<path class="cr" d="M629.76 65.05V70.29"/>
<path class="cb" d="M630.57 64.42V65.93M631.38 62.95V68.02"/>
<path class="cy" d="M631.38 67.01h1.6"/>
<path class="cr" d="M632.99 63.2V67.58M633.79 63.72V65.8"/>
<path class="cb" d="M634.6 63.46V67.98"/>
<path class="cr" d="M635.4 62.63V67.91"/>
<path class="cb" d="M636.21 61.4V64.48M637.01 60.96V70.09M637.82 68.34V71.75M639.43 75.69V78.94"/>
<path class="cr" d="M640.23 73.68V81.16"/>
<path class="cy" d="M640.24 75.24h1.6"/>
<path class="cr" d="M641.84 69.88V75.82M644.25 70.8V76.54M645.06 69.89V71.26M646.67 60.86V67.6"/>
<path class="cb" d="M648.28 58.25V63.55"/>
<path class="cr" d="M649.09 58.43V61.89"/>
<path class="cb" d="M649.89 58.08V61.47"/>
<path class="cr" d="M650.7 58.24V63.01"/>
<path class="cb" d="M651.5 58.17V63.65"/>
<path class="cy" d="M651.51 60.17h1.6"/>
<path class="cr" d="M653.11 58.99V61.16"/>
<path class="cb" d="M653.92 60V63.84"/>
<path class="cy" d="M653.92 61.48h1.6"/>
<path class="cb" d="M655.53 61.11V66.68M656.33 64.14V67.89M657.94 70.56V79.61M658.75 76.83V87.31M660.36 89.93V94.9"/>
<path class="cr" d="M661.16 92.74V95.8M661.97 88.97V93.13"/>
<path class="cb" d="M663.58 85.52V88.99"/>
<path class="cr" d="M664.38 88.49V88.96M665.19 80.36V89.48"/>
<path class="cy" d="M666.8 82.3h1.6"/>
<path class="cr" d="M668.41 80.45V84.48"/>
<path class="cy" d="M669.22 77.31h1.6M670.02 75.37h1.6"/>
<path class="cb" d="M671.62 74.71V76.87"/>
<path class="cr" d="M672.43 70.35V75.98M674.04 66.77V67.9"/>
<path class="cy" d="M674.05 65.07h1.6"/>
<path class="cb" d="M675.65 62.99V66.51"/>
<path class="cy" d="M675.66 67.52h1.6"/>
<path class="cb" d="M677.26 67.18V74.59"/>
<path class="cr" d="M678.07 71.52V74.62M678.87 68.65V72.6M679.68 65.97V68.86M682.09 70.9V78.83M682.9 65.17V74.65M683.7 59.36V68.19"/>
<path class="cy" d="M683.71 61.97h1.6"/>
<path class="cr" d="M685.31 58.72V63.29"/>
<path class="cb" d="M686.12 58.21V61.49"/>
<path class="cr" d="M686.92 58.56V62.64"/>
<path class="cb" d="M687.73 58.88V68"/>
<path class="cr" d="M688.53 64.63V66.01M689.34 64.5V66.47M690.14 65.42V66.6M690.95 60.41V65.98M692.56 61.29V64.15M693.36 61.03V63.68"/>
<path class="cb" d="M694.17 60.57V67.22M694.97 65.49V70.61"/>
<path class="cr" d="M695.78 64.52V70.24"/>
<path class="cb" d="M696.58 64.52V66.35"/>
<path class="cr" d="M697.38 64.13V66.32M698.19 60.82V64.2M699 60.71V63.03M699.8 57.22V62M700.61 55.49V61.01M702.22 55.86V57.65"/>
<path class="cb" d="M703.02 55.06V58.18M705.44 55.65V62"/>
<path class="cy" d="M705.44 60.97h1.6"/>
<path class="cb" d="M707.05 60.81V63.11M707.85 61.39V65.58M708.66 62.89V66.04M709.46 65.06V71.52M710.26 69.7V74.59M711.07 73.15V78.22"/>
<path class="cy" d="M711.08 76.23h1.6"/>
<path class="cr" d="M713.49 64.85V67.92M714.29 57.61V66.14"/>
<path class="cb" d="M715.9 52.16V59.04M716.71 57.52V62.24M717.51 61.07V65.56"/>
<path class="cy" d="M717.52 62.84h1.6"/>
<path class="cr" d="M719.12 60.09V63.16"/>
<path class="cy" d="M719.13 59.13h1.6"/>
<path class="cr" d="M722.34 52.37V53.51"/>
<path class="cb" d="M724.75 52.4V63.45M726.37 66.71V74.74M727.17 71.31V79.69M727.98 75.3V83.06"/>
<path class="cy" d="M727.98 82.92h1.6"/>
<path class="cb" d="M729.59 80.87V86.84M731.2 84.9V89.53"/>
<path class="cy" d="M731.2 85.77h1.6"/>
<path class="cr" d="M734.42 77.6V79.64"/>
<path class="cb" d="M735.22 77.52V80.16"/>
<path class="cr" d="M736.03 76.22V81.44"/>
<path class="cb" d="M736.83 75.89V83.95M737.63 82.2V89.3"/>
<path class="cy" d="M737.64 91.75h1.6M738.45 91.95h1.6"/>
<path class="cb" d="M740.05 91.68V97.59"/>
<path class="cr" d="M740.86 89.77V98.08M741.66 86.08V94.46"/>
<path class="cb" d="M742.47 86.1V87.44"/>
<path class="cr" d="M743.27 83.45V88.22"/>
<path class="cb" d="M744.08 84.07V88.72"/>
<path class="cr" d="M744.88 85.59V89.39"/>
<path class="cy" d="M745.69 88.89h1.6"/>
<path class="cb" d="M747.3 87.29V89.97"/>
<path class="cr" d="M748.1 86.29V90.15M748.91 83.04V87.53"/>
<path class="cb" d="M749.71 83.18V87.57"/>
<path class="cr" d="M751.32 82.24V88.71"/>
<path class="cb" d="M752.12 83.53V88.42M752.93 85.41V91.32M755.35 87.83V94.11M756.15 92.19V100"/>
<path class="cr" d="M756.96 95.55V98.73M757.76 93.14V98.92M758.57 83.87V95.29"/>
<path class="cb" d="M759.37 85.98V90.88M760.18 88.01V94.31"/>
<path class="cr" d="M761.79 97.08V100.69"/>
<path class="cy" d="M761.79 98.92h1.6"/>
<path class="cr" d="M763.4 98.23V100.31M764.2 95.11V101.5M765 92.63V100.79M765.81 93.35V95.24M766.62 88.02V94.17"/>
<path class="cy" d="M766.62 88.93h1.6"/>
<path class="cb" d="M769.03 86.17V90.3"/>
<path class="cr" d="M769.84 88.25V91.09M770.64 88.8V89.52"/>
<path class="cb" d="M771.45 86.77V95.09"/>
<path class="cr" d="M772.25 89.24V94.1M773.06 86.5V92.49M773.86 84.66V88.82M774.67 84.24V85.89"/>
<path class="cb" d="M776.28 82.19V84.56"/>
<path class="cy" d="M777.89 83.22h1.6"/>
<path class="cr" d="M779.5 73.57V83.85"/>
<path class="cb" d="M780.3 74.5V75.73"/>
<path class="cr" d="M781.11 70.47V76.32"/>
<path class="cy" d="M781.11 70.8h1.6"/>
<path class="cr" d="M785.13 63.09V67.84"/>
<path class="cb" d="M785.94 62.44V64.68M786.74 63.92V66.68M787.55 66.25V68.72M788.35 66.37V69.22M789.16 67.49V73.13"/>
<path class="cy" d="M789.16 68.82h1.6"/>
<path class="cr" d="M791.57 65.46V70.14"/>
<path class="cb" d="M792.38 65.74V71.93"/>
<path class="cy" d="M792.38 72.83h1.6"/>
<path class="cb" d="M793.99 72.36V77.73M794.79 75.22V76.9"/>
<path class="cr" d="M795.6 76.34V77.15M796.4 74.98V78.21M797.21 71.91V76.99"/>
<path class="cy" d="M797.21 71.93h1.6"/>
<path class="cr" d="M799.62 70.61V74.74"/>
<path class="cy" d="M799.63 70.54h1.6"/>
<path class="cr" d="M802.04 70.93V72.96M802.84 71.6V72.08M803.65 71.39V73.22M806.06 69.5V70.93M806.87 67.55V70.12M808.48 65.04V68.05M809.28 64.39V65.83"/>
<path class="cy" d="M809.29 65.62h1.6"/>
<path class="cr" d="M810.89 62.19V66.4"/>
<path class="cy" d="M811.7 63.99h1.6M813.31 65.01h1.6"/>
<path class="cb" d="M815.72 61.71V63.1"/>
<path class="cr" d="M816.53 60.98V63.07"/>
<path class="cy" d="M817.34 64.4h1.6"/>
<path class="cb" d="M819.75 59.27V61.15"/>
<path class="cr" d="M820.55 60.32V61.56M821.36 59.25V61"/>
<path class="cy" d="M821.36 59.84h1.6"/>
<path class="cb" d="M824.58 59.35V62.08M826.99 59.58V63.19"/>
<path class="cr" d="M827.8 61.95V62.95"/>
<path class="cb" d="M828.6 62.77V65.54"/>
<path class="cr" d="M830.21 60.15V63.37"/>
<path class="cb" d="M831.02 60.61V63.6M832.62 63.88V66.34"/>
<path class="cy" d="M832.63 63.85h1.6"/>
<path class="cb" d="M834.24 62.38V64.72M835.04 64.61V66.87"/>
<path class="cr" d="M835.85 62.52V66.38M836.65 60.94V64.73M837.46 59.64V63.57M838.26 55.88V61.25M839.07 52.09V56.28"/>
<path class="cb" d="M839.87 52.45V56.06"/>
<path class="cy" d="M839.88 56.63h1.6M841.49 57.21h1.6M843.9 55.33h1.6"/>
<path class="cb" d="M845.5 55.11V56.07"/>
<path class="cr" d="M846.31 53.04V56.79"/>
<path class="cb" d="M847.92 54.27V60.62M848.73 58.92V61.96"/>
<path class="cr" d="M849.53 59.12V61.25M850.34 57.93V59.37"/>
<path class="cy" d="M850.34 59.19h1.6"/>
<path class="cb" d="M851.95 59V61.06"/>
<path class="cr" d="M853.56 62.62V63.66"/>
<path class="cb" d="M855.17 60.2V62.87"/>
<path class="cr" d="M855.97 57.71V62"/>
<path class="cy" d="M855.98 57.94h1.6M856.78 57.42h1.6"/>
<path class="cr" d="M858.39 55.35V57.86M859.19 54.09V56.2M860.8 52.32V56.07M861.61 51.02V52.62"/>
<path class="cb" d="M862.41 49.24V52.85M863.22 51.06V53.07M864.02 51.79V55.71M866.44 57.92V58.84M868.05 58.75V61.24"/>
<path class="cy" d="M868.86 61.74h1.6"/>
<path class="cb" d="M871.27 66.16V70.07"/>
<path class="cy" d="M871.27 69.95h1.6"/>
<path class="cb" d="M872.88 67.88V73.48"/>
<path class="cy" d="M872.88 74.48h1.6M873.69 75.14h1.6"/>
<path class="cb" d="M875.29 74.31V76.4"/>
<path class="cy" d="M875.3 76.71h1.6"/>
<path class="cr" d="M876.9 74.97V76.89"/>
<path class="cy" d="M880.13 67.4h1.6"/>
<path class="cb" d="M881.73 66.37V68.43M882.54 67.86V69.86M885.76 67.55V69.64M886.56 68.83V71.36"/>
<path class="cr" d="M888.17 66.03V69.23M888.98 66.4V69.29M889.78 67.45V68.9M890.59 65.06V67.96M891.39 62.52V66.72M892.2 61.75V63.22"/>
<path class="cy" d="M892.2 63.17h1.6M893.01 63.03h1.6"/>
<path class="cr" d="M895.42 60.66V65.19M896.22 60.3V62.48"/>
<path class="cb" d="M897.03 60.53V64.54"/>
<path class="cy" d="M897.03 63.17h1.6"/>
<path class="cr" d="M898.64 61.27V63.88M899.44 60.39V62.67"/>
<path class="cy" d="M901.86 62.34h1.6"/>
<path class="cb" d="M905.88 58.25V61.75M906.69 58.82V62.58"/>
<path class="cy" d="M906.69 60.33h1.6M907.5 59.01h1.6"/>
<path class="cb" d="M909.1 56.96V61.54"/>
<path class="cr" d="M913.12 63.32V64.53M914.74 60.63V63.44"/>
<path class="cb" d="M915.54 60.93V65.08"/>
<path class="cr" d="M917.15 64.03V64.73M919.57 62.69V64.59"/>
<path class="cy" d="M919.57 63.81h1.6"/>
<path class="cb" d="M921.18 63.22V68.71M921.98 66.96V70.85M922.79 68.53V71.32M923.59 70.52V73.05M924.4 71.37V74.4"/>
<path class="cr" d="M925.2 70V74.1M926.01 66.27V72.07M926.81 66.32V67.41M927.62 65.04V67.3M928.42 62.54V66.18"/>
<path class="cy" d="M929.23 65.63h1.6"/>
<path class="cr" d="M930.84 64.31V67.66"/>
<path class="cb" d="M932.45 64.63V68.59"/>
<path class="cr" d="M933.25 65.62V67.84"/>
<path class="cy" d="M933.26 65.35h1.6"/>
<path class="cr" d="M936.47 59.7V61.58M937.28 58.97V60.98"/>
<path class="cy" d="M937.28 59.55h1.6M938.09 56.8h1.6"/>
<path class="cb" d="M939.69 55.31V58.01"/>
<path class="cr" d="M940.5 55.52V58.7"/>
<path class="cb" d="M941.3 55.55V57.4"/>
<path class="cy" d="M941.31 56.54h1.6M942.11 56.92h1.6M942.92 57.57h1.6"/>
<path class="cr" d="M944.52 55.13V59.24"/>
<path class="cy" d="M945.33 54.19h1.6"/>
<path class="cr" d="M947.74 49.98V51.82"/>
<path class="cb" d="M948.55 50.09V53.53"/>
<path class="cy" d="M948.55 53.36h1.6"/>
<path class="cb" d="M950.96 50.45V54.23M951.77 52.43V57.15M953.38 54.06V56.78M954.18 55.9V58.18M955.79 58.14V61.03"/>
<path class="cr" d="M957.4 55.4V59.25"/>
<path class="cb" d="M959.01 56.5V58.62"/>
<path class="cr" d="M960.62 55.5V59.17M961.43 54.23V55.88M962.23 50.84V55.34M963.84 49.31V52.74"/>
<path class="cb" d="M966.26 47.52V50.15M967.06 47.88V54.92M967.87 51.29V56.29"/>
<path class="cr" d="M968.67 53.82V56.27"/>
<path d="M282.4 76.3V92M38.9 172V181M500 112V123.6M738.8 88V102.4" stroke="#ff0018" stroke-width="1.0" fill="none"/>
<path d="M971.6 39.1V189.4H5.9" fill="none" stroke="#d8d8d8" stroke-width="1.1"/>
<text x="6.5" y="49" font-family="'Liberation Sans','Noto Sans CJK JP',sans-serif" font-size="9.6" fill="#e6e6e6" stroke="#e6e6e6" stroke-width="0.1">時刻</text>
<text x="60.2" y="49" font-family="'Liberation Sans','Noto Sans CJK JP',sans-serif" font-size="9.6" fill="#e6e6e6" stroke="#e6e6e6" stroke-width="0.1">始値</text>
<text x="119.1" y="49" font-family="'Liberation Sans','Noto Sans CJK JP',sans-serif" font-size="9.6" fill="#e6e6e6" stroke="#e6e6e6" stroke-width="0.1">高値</text>
<text x="177.8" y="49" font-family="'Liberation Sans','Noto Sans CJK JP',sans-serif" font-size="9.6" fill="#e6e6e6" stroke="#e6e6e6" stroke-width="0.1">安値</text>
<text x="236.5" y="49" font-family="'Liberation Sans','Noto Sans CJK JP',sans-serif" font-size="9.6" fill="#e6e6e6" stroke="#e6e6e6" stroke-width="0.1">終値</text>
<text style="will-change:transform" transform="scale(0.82,1)" x="34.45 40.43 46.4 52.38 58.35 64.33 100.18 106.16 112.13 118.11 124.09 130.06 136.04 171.89 177.87 183.84 189.82 195.79 201.77 207.74 243.6 249.57 255.55 261.52 267.5 273.48 279.45 315.3 321.28 327.26 333.23 339.21 345.18 351.16" y="48.7" text-anchor="middle" font-family="Liberation Sans, sans-serif" font-size="9.6"  fill="#e6e6e6" stroke="#e6e6e6" stroke-width="0.12">:06:00:22,115:22,115:22,115:22,115</text>
<text style="will-change:transform" transform="scale(0.82,1)" x="852.5 858.48" y="185.2" text-anchor="middle" font-family="Liberation Sans, sans-serif" font-size="9.6"  fill="#d6d6d6" stroke="#d6d6d6" stroke-width="0.17">18</text>
<text style="will-change:transform" transform="scale(0.82,1)" x="15.06 21.04" y="197.3" text-anchor="middle" font-family="Liberation Sans, sans-serif" font-size="9.6"  fill="#d6d6d6" stroke="#d6d6d6" stroke-width="0.17">05</text>
<text style="will-change:transform" transform="scale(0.82,1)" x="37.87 43.84" y="197.3" text-anchor="middle" font-family="Liberation Sans, sans-serif" font-size="9.6" font-weight="bold" fill="#ffffff" stroke="#ffffff" stroke-width="0.17">06</text>
<text style="will-change:transform" transform="scale(0.82,1)" x="69.02 75" y="197.3" text-anchor="middle" font-family="Liberation Sans, sans-serif" font-size="9.6"  fill="#d6d6d6" stroke="#d6d6d6" stroke-width="0.17">09</text>
<text style="will-change:transform" transform="scale(0.82,1)" x="127.26 133.23" y="197.3" text-anchor="middle" font-family="Liberation Sans, sans-serif" font-size="9.6"  fill="#d6d6d6" stroke="#d6d6d6" stroke-width="0.17">10</text>
<text style="will-change:transform" transform="scale(0.82,1)" x="186.4 192.38" y="197.3" text-anchor="middle" font-family="Liberation Sans, sans-serif" font-size="9.6"  fill="#d6d6d6" stroke="#d6d6d6" stroke-width="0.17">11</text>
<text style="will-change:transform" transform="scale(0.82,1)" x="245.24 251.22" y="197.3" text-anchor="middle" font-family="Liberation Sans, sans-serif" font-size="9.6"  fill="#d6d6d6" stroke="#d6d6d6" stroke-width="0.17">12</text>
<text style="will-change:transform" transform="scale(0.82,1)" x="303.78 309.76" y="197.3" text-anchor="middle" font-family="Liberation Sans, sans-serif" font-size="9.6"  fill="#d6d6d6" stroke="#d6d6d6" stroke-width="0.17">13</text>
<text style="will-change:transform" transform="scale(0.82,1)" x="363.23 369.21" y="197.3" text-anchor="middle" font-family="Liberation Sans, sans-serif" font-size="9.6"  fill="#d6d6d6" stroke="#d6d6d6" stroke-width="0.17">14</text>
<text style="will-change:transform" transform="scale(0.82,1)" x="421.77 427.74" y="197.3" text-anchor="middle" font-family="Liberation Sans, sans-serif" font-size="9.6"  fill="#d6d6d6" stroke="#d6d6d6" stroke-width="0.17">15</text>
<text style="will-change:transform" transform="scale(0.82,1)" x="462.32 468.29" y="197.3" text-anchor="middle" font-family="Liberation Sans, sans-serif" font-size="9.6"  fill="#d6d6d6" stroke="#d6d6d6" stroke-width="0.17">17</text>
<text style="will-change:transform" transform="scale(0.82,1)" x="521.16 527.13" y="197.3" text-anchor="middle" font-family="Liberation Sans, sans-serif" font-size="9.6"  fill="#d6d6d6" stroke="#d6d6d6" stroke-width="0.17">18</text>
<text style="will-change:transform" transform="scale(0.82,1)" x="580.3 586.28" y="197.3" text-anchor="middle" font-family="Liberation Sans, sans-serif" font-size="9.6"  fill="#d6d6d6" stroke="#d6d6d6" stroke-width="0.17">19</text>
<text style="will-change:transform" transform="scale(0.82,1)" x="634.57 640.55" y="197.3" text-anchor="middle" font-family="Liberation Sans, sans-serif" font-size="9.6"  fill="#d6d6d6" stroke="#d6d6d6" stroke-width="0.17">20</text>
<text style="will-change:transform" transform="scale(0.82,1)" x="681.83 687.8" y="197.3" text-anchor="middle" font-family="Liberation Sans, sans-serif" font-size="9.6"  fill="#d6d6d6" stroke="#d6d6d6" stroke-width="0.17">21</text>
<text style="will-change:transform" transform="scale(0.82,1)" x="733.66 739.63" y="197.3" text-anchor="middle" font-family="Liberation Sans, sans-serif" font-size="9.6"  fill="#d6d6d6" stroke="#d6d6d6" stroke-width="0.17">22</text>
<text style="will-change:transform" transform="scale(0.82,1)" x="792.5 798.48" y="197.3" text-anchor="middle" font-family="Liberation Sans, sans-serif" font-size="9.6"  fill="#d6d6d6" stroke="#d6d6d6" stroke-width="0.17">23</text>
<text style="will-change:transform" transform="scale(0.82,1)" x="851.65 857.62" y="197.3" text-anchor="middle" font-family="Liberation Sans, sans-serif" font-size="9.6"  fill="#d6d6d6" stroke="#d6d6d6" stroke-width="0.17">00</text>
<text style="will-change:transform" transform="scale(0.82,1)" x="910.49 916.46" y="197.3" text-anchor="middle" font-family="Liberation Sans, sans-serif" font-size="9.6"  fill="#d6d6d6" stroke="#d6d6d6" stroke-width="0.17">01</text>
<text style="will-change:transform" transform="scale(0.82,1)" x="969.94 975.91" y="197.3" text-anchor="middle" font-family="Liberation Sans, sans-serif" font-size="9.6"  fill="#d6d6d6" stroke="#d6d6d6" stroke-width="0.17">02</text>
<text style="will-change:transform" transform="scale(0.82,1)" x="1024.82 1030.79" y="197.3" text-anchor="middle" font-family="Liberation Sans, sans-serif" font-size="9.6"  fill="#d6d6d6" stroke="#d6d6d6" stroke-width="0.17">03</text>
<text style="will-change:transform" transform="scale(0.82,1)" x="1082.74 1088.72" y="197.3" text-anchor="middle" font-family="Liberation Sans, sans-serif" font-size="9.6"  fill="#d6d6d6" stroke="#d6d6d6" stroke-width="0.17">04</text>
<text style="will-change:transform" transform="scale(0.82,1)" x="1136.1 1142.07" y="197.3" text-anchor="middle" font-family="Liberation Sans, sans-serif" font-size="9.6"  fill="#d6d6d6" stroke="#d6d6d6" stroke-width="0.17">05</text>
<text style="will-change:transform" transform="scale(0.82,1)" x="1169.57 1175.55" y="197.3" text-anchor="middle" font-family="Liberation Sans, sans-serif" font-size="9.6"  fill="#d6d6d6" stroke="#d6d6d6" stroke-width="0.17">06</text>
<text style="will-change:transform" transform="scale(0.82,1)" x="1189.21 1195.18 1201.16 1207.13 1213.11 1219.09" y="95.35" text-anchor="middle" font-family="Liberation Sans, sans-serif" font-size="9.6"  fill="#c4c4c4" stroke="#c4c4c4" stroke-width="0.17">22,000</text>
<text style="will-change:transform" transform="scale(0.82,1)" x="1189.21 1195.18 1201.16 1207.13 1213.11 1219.09" y="140.25" text-anchor="middle" font-family="Liberation Sans, sans-serif" font-size="9.6"  fill="#c4c4c4" stroke="#c4c4c4" stroke-width="0.17">21,900</text>
<text style="will-change:transform" transform="scale(0.82,1)" x="1189.21 1195.18 1201.16 1207.13 1213.11 1219.09" y="185.45" text-anchor="middle" font-family="Liberation Sans, sans-serif" font-size="9.6"  fill="#c4c4c4" stroke="#c4c4c4" stroke-width="0.17">21,800</text>
<rect x="972.1" y="39.1" width="47.2" height="15.3" fill="#dedede"/>
<text style="will-change:transform" transform="scale(0.84,1)" x="1170.18 1176.25 1182.32 1188.39 1194.46 1200.54" y="49.1" text-anchor="middle" font-family="Liberation Sans, sans-serif" font-size="10" font-weight="bold" fill="#000" stroke="#000" stroke-width="0.18">22,115</text>
<rect x="5" y="201.9" width="1014.3" height="3.9" fill="url(#gsep)"/>
<rect x="5" y="205.8" width="1014.3" height="151.6" fill="#1b1b1b"/>
<rect x="5.9" y="205.8" width="965.3" height="138.8" fill="#000"/>
<g stroke="#fff" stroke-opacity="0.2" stroke-width="1.5" fill="none">
<line x1="9.5" y1="205.8" x2="9.5" y2="344.6"/>
<line x1="40.5" y1="205.8" x2="40.5" y2="344.6"/>
<line x1="53.75" y1="205.8" x2="53.75" y2="344.6"/>
<line x1="101.5" y1="205.8" x2="101.5" y2="344.6"/>
<line x1="150" y1="205.8" x2="150" y2="344.6"/>
<line x1="198.25" y1="205.8" x2="198.25" y2="344.6"/>
<line x1="246.25" y1="205.8" x2="246.25" y2="344.6"/>
<line x1="295" y1="205.8" x2="295" y2="344.6"/>
<line x1="343" y1="205.8" x2="343" y2="344.6"/>
<line x1="376.25" y1="205.8" x2="376.25" y2="344.6"/>
<line x1="424.5" y1="205.8" x2="424.5" y2="344.6"/>
<line x1="473" y1="205.8" x2="473" y2="344.6"/>
<line x1="517.5" y1="205.8" x2="517.5" y2="344.6"/>
<line x1="556.25" y1="205.8" x2="556.25" y2="344.6"/>
<line x1="598.75" y1="205.8" x2="598.75" y2="344.6"/>
<line x1="647" y1="205.8" x2="647" y2="344.6"/>
<line x1="695.5" y1="205.8" x2="695.5" y2="344.6"/>
<line x1="743.75" y1="205.8" x2="743.75" y2="344.6"/>
<line x1="792.5" y1="205.8" x2="792.5" y2="344.6"/>
<line x1="837.5" y1="205.8" x2="837.5" y2="344.6"/>
<line x1="885" y1="205.8" x2="885" y2="344.6"/>
<line x1="928.75" y1="205.8" x2="928.75" y2="344.6"/>
<line x1="968.75" y1="205.8" x2="968.75" y2="344.6"/>
<line x1="5.9" y1="229.2" x2="971.2" y2="229.2"/>
<line x1="5.9" y1="253.2" x2="971.2" y2="253.2"/>
<line x1="5.9" y1="277" x2="971.2" y2="277"/>
<line x1="5.9" y1="300.8" x2="971.2" y2="300.8"/>
<line x1="5.9" y1="324.3" x2="971.2" y2="324.3"/>
</g>
<g stroke="#fff" stroke-opacity="0.3" stroke-width="1.0" stroke-dasharray="0.82 0.82" fill="none">
<line x1="9.5" y1="205.8" x2="9.5" y2="344.6"/>
<line x1="40.5" y1="205.8" x2="40.5" y2="344.6"/>
<line x1="53.75" y1="205.8" x2="53.75" y2="344.6"/>
<line x1="101.5" y1="205.8" x2="101.5" y2="344.6"/>
<line x1="150" y1="205.8" x2="150" y2="344.6"/>
<line x1="198.25" y1="205.8" x2="198.25" y2="344.6"/>
<line x1="246.25" y1="205.8" x2="246.25" y2="344.6"/>
<line x1="295" y1="205.8" x2="295" y2="344.6"/>
<line x1="343" y1="205.8" x2="343" y2="344.6"/>
<line x1="376.25" y1="205.8" x2="376.25" y2="344.6"/>
<line x1="424.5" y1="205.8" x2="424.5" y2="344.6"/>
<line x1="473" y1="205.8" x2="473" y2="344.6"/>
<line x1="517.5" y1="205.8" x2="517.5" y2="344.6"/>
<line x1="556.25" y1="205.8" x2="556.25" y2="344.6"/>
<line x1="598.75" y1="205.8" x2="598.75" y2="344.6"/>
<line x1="647" y1="205.8" x2="647" y2="344.6"/>
<line x1="695.5" y1="205.8" x2="695.5" y2="344.6"/>
<line x1="743.75" y1="205.8" x2="743.75" y2="344.6"/>
<line x1="792.5" y1="205.8" x2="792.5" y2="344.6"/>
<line x1="837.5" y1="205.8" x2="837.5" y2="344.6"/>
<line x1="885" y1="205.8" x2="885" y2="344.6"/>
<line x1="928.75" y1="205.8" x2="928.75" y2="344.6"/>
<line x1="968.75" y1="205.8" x2="968.75" y2="344.6"/>
<line x1="5.9" y1="229.2" x2="971.2" y2="229.2"/>
<line x1="5.9" y1="253.2" x2="971.2" y2="253.2"/>
<line x1="5.9" y1="277" x2="971.2" y2="277"/>
<line x1="5.9" y1="300.8" x2="971.2" y2="300.8"/>
<line x1="5.9" y1="324.3" x2="971.2" y2="324.3"/>
</g>
<path class="cy" d="M38.9 335.67h1.6"/>
<path class="cr" d="M40.51 333.45V336.54M41.31 327.93V333.75M42.92 324.61V326.75M43.73 322.59V325.83M46.14 322.26V325.7M46.95 315.55V323.42M47.75 315.41V317.67M49.36 306.53V309.32M50.16 305.69V307.4"/>
<path class="cb" d="M50.97 305.21V309.28M51.78 307.26V310.44"/>
<path class="cr" d="M52.58 307.57V310.1"/>
<path class="cy" d="M52.59 307.31h1.6"/>
<path class="cb" d="M54.19 307.24V307.84"/>
<path class="cr" d="M55 306.05V308.98M55.8 306.12V306.95M56.61 305.76V307.35M57.41 303.89V307.45"/>
<path class="cy" d="M58.22 304.64h1.6"/>
<path class="cr" d="M59.83 302.99V305M60.63 300.67V303.43"/>
<path class="cb" d="M61.44 302.01V302.29"/>
<path class="cr" d="M62.24 301.3V302.36M63.05 299.94V301.57M63.85 300.12V301.14M64.66 299.59V301.2"/>
<path class="cb" d="M65.46 299.7V301.2"/>
<path class="cr" d="M67.07 297.54V300.14"/>
<path class="cb" d="M67.88 298.34V301.53"/>
<path class="cr" d="M68.68 298.62V300.46"/>
<path class="cb" d="M69.49 298.91V302.39"/>
<path class="cr" d="M70.29 301.75V302.53"/>
<path class="cy" d="M70.3 302.76h1.6"/>
<path class="cr" d="M71.9 300.79V302.91"/>
<path class="cb" d="M72.7 301.93V304.68M75.12 306.61V307.96"/>
<path class="cr" d="M75.92 307.61V308.46M76.73 305.7V308.08M77.54 303.34V307.27"/>
<path class="cb" d="M79.15 300.57V303.47M79.95 302.84V305.28M80.76 304.24V306.88M81.56 305.35V308.19"/>
<path class="cy" d="M82.37 306.31h1.6M83.98 304.9h1.6"/>
<path class="cr" d="M85.59 303.06V305.3"/>
<path class="cb" d="M86.39 302.79V304.46M87.2 303.01V307.8M88 304.24V307.32M89.61 306.54V308.58"/>
<path class="cy" d="M90.42 308.38h1.6"/>
<path class="cb" d="M92.03 307.12V312.19"/>
<path class="cr" d="M93.64 294.89V306.6M94.44 294.5V295.77"/>
<path class="cy" d="M94.45 295.92h1.6"/>
<path class="cb" d="M96.05 293.99V299.43M96.86 297.37V299.78"/>
<path class="cr" d="M97.66 296.17V299.35M98.47 297.48V298.57M100.08 297.56V298.09M100.88 294.29V298.41M101.69 291.9V294.62M102.49 290V292.28"/>
<path class="cy" d="M103.3 289.02h1.6M104.11 286.2h1.6"/>
<path class="cr" d="M105.71 283.25V286.23M106.52 282.35V284.9M107.32 280.78V284.34"/>
<path class="cb" d="M108.12 280.1V281.93M108.93 281.28V282.41"/>
<path class="cr" d="M109.73 280.96V282.85"/>
<path class="cb" d="M111.35 281.37V284.31M112.15 283.05V286.11M112.96 283.74V286.62"/>
<path class="cr" d="M114.57 284.86V288.39"/>
<path class="cy" d="M115.38 284.27h1.6"/>
<path class="cr" d="M116.98 281.44V285.3"/>
<path class="cb" d="M117.79 282.64V283.58"/>
<path class="cr" d="M118.59 279.72V283.36M119.4 279.46V281.54M120.2 276.37V280.34"/>
<path class="cy" d="M120.21 275.82h1.6"/>
<path class="cr" d="M122.62 271.73V274.04M123.42 266.84V272.9M124.23 267.54V268.62M125.84 266.53V268.84M126.64 263.4V266.71M127.45 262.19V265.38M129.06 261.61V263.14"/>
<path class="cy" d="M130.67 256.71h1.6"/>
<path class="cb" d="M132.28 255.61V261.86M133.88 262.06V263.23M134.69 261.39V265.94"/>
<path class="cr" d="M135.5 264.41V267.21M136.3 262.21V266.07M137.11 258.45V263.06M137.91 256.8V260.61M140.33 254.81V256.23M141.13 253.38V255.41M141.94 252.17V254.77"/>
<path class="cb" d="M142.74 252.71V255.4M144.35 255.16V257.63"/>
<path class="cr" d="M145.16 255.5V257.66M145.96 255.01V256.86M146.77 254.85V256.18"/>
<path class="cb" d="M147.57 254.42V255.94"/>
<path class="cr" d="M148.38 254.4V255.91M149.99 254.57V255.19"/>
<path class="cb" d="M150.79 254.65V257.2M152.4 257.1V258.66"/>
<path class="cr" d="M154.81 259.04V259.87"/>
<path class="cb" d="M155.62 258.58V261.21"/>
<path class="cr" d="M158.03 262.64V264.69M159.65 261.73V262.85M160.45 260.7V262.2M161.25 259.67V261.21"/>
<path class="cb" d="M163.67 258.64V260.9"/>
<path class="cy" d="M166.09 259.78h1.6"/>
<path class="cr" d="M167.7 258.71V260.33"/>
<path class="cy" d="M167.7 258.95h1.6"/>
<path class="cr" d="M169.31 258.03V259.44M172.53 257.2V259.32M173.33 257.22V259.25"/>
<path class="cy" d="M174.14 257.4h1.6"/>
<path class="cb" d="M175.75 257.08V258.33"/>
<path class="cr" d="M176.55 256.62V258.53"/>
<path class="cb" d="M177.36 256.82V258.91"/>
<path class="cy" d="M177.36 258.85h1.6"/>
<path class="cr" d="M179.77 258.69V260.44"/>
<path class="cy" d="M179.78 259.38h1.6"/>
<path class="cb" d="M181.38 258.55V260.61M182.19 259.49V261.08M185.41 259.31V260.99"/>
<path class="cr" d="M187.02 257.66V260.53"/>
<path class="cy" d="M187.02 258.17h1.6"/>
<path class="cb" d="M188.62 257.31V259.31M189.43 257.84V259.92"/>
<path class="cr" d="M190.24 258.77V260.05M191.04 258.59V259.79"/>
<path class="cb" d="M191.84 258.22V259.83"/>
<path class="cr" d="M192.65 257.55V259.98"/>
<path class="cy" d="M192.66 259.47h1.6"/>
<path class="cb" d="M194.26 258.81V260.37"/>
<path class="cr" d="M195.06 258.12V260.81M197.48 255.31V257.85"/>
<path class="cy" d="M197.49 255.86h1.6M198.29 255.4h1.6"/>
<path class="cb" d="M199.9 255.02V256.66M200.7 255.58V256.95M202.31 255.89V257.95M203.12 257.36V259.45M203.92 258.26V259.64"/>
<path class="cr" d="M204.73 258.64V259.44"/>
<path class="cb" d="M205.53 257.62V259.25M207.14 258.94V260.38M207.95 259.62V260.21M209.56 261.52V262.41"/>
<path class="cr" d="M211.17 261.71V263.68M211.97 259.74V263.53M212.78 260.51V260.81"/>
<path class="cy" d="M213.59 260.03h1.6"/>
<path class="cb" d="M215.19 259.27V260.68"/>
<path class="cr" d="M218.41 261.65V262.85M219.22 260.69V262.12"/>
<path class="cb" d="M220.02 260.47V262.01"/>
<path class="cr" d="M221.63 261.7V262.95"/>
<path class="cb" d="M222.44 260.78V263.01"/>
<path class="cr" d="M224.85 259.06V260.18M225.66 257.71V259.88M226.46 256.41V258.17"/>
<path class="cy" d="M226.47 256.56h1.6"/>
<path class="cb" d="M228.07 256.47V257.7"/>
<path class="cr" d="M228.88 255.73V257.65"/>
<path class="cb" d="M230.49 255.67V257.58"/>
<path class="cr" d="M232.9 255.12V256.52"/>
<path class="cb" d="M233.71 254.53V257.42"/>
<path class="cy" d="M234.52 255.29h1.6"/>
<path class="cb" d="M236.93 255.89V257.59"/>
<path class="cy" d="M236.93 257.82h1.6M237.74 257.16h1.6"/>
<path class="cr" d="M240.95 255.84V257.77"/>
<path class="cb" d="M241.76 256.07V257.72"/>
<path class="cr" d="M242.56 257.19V257.38"/>
<path class="cb" d="M243.37 256.45V258.53"/>
<path class="cy" d="M244.18 257.28h1.6"/>
<path class="cb" d="M245.78 256.52V259.71"/>
<path class="cy" d="M245.78 257.66h1.6M246.59 257.47h1.6M248.2 252.61h1.6"/>
<path class="cr" d="M249.81 236.98V252.63M250.61 236.02V238.1"/>
<path class="cb" d="M251.42 235.98V239.44"/>
<path class="cy" d="M251.42 236.91h1.6M252.22 237.42h1.6"/>
<path class="cb" d="M253.83 236.58V239.32M255.44 238.36V240.07"/>
<path class="cy" d="M255.44 238.56h1.6"/>
<path class="cr" d="M257.05 235.77V238.74"/>
<path class="cb" d="M257.86 235.81V237.59"/>
<path class="cr" d="M258.66 235.44V237.44"/>
<path class="cb" d="M259.47 235.88V236.81M260.27 234.51V239.57M261.08 237.81V239.35"/>
<path class="cr" d="M261.88 236.42V241.05M262.69 236.45V237.97"/>
<path class="cb" d="M263.49 236.22V240.85M265.1 240.58V243.17"/>
<path class="cr" d="M265.91 241.74V242.05"/>
<path class="cy" d="M266.72 239.21h1.6"/>
<path class="cb" d="M268.32 239.02V241.17"/>
<path class="cr" d="M269.12 237.19V240.03"/>
<path class="cy" d="M269.13 238.14h1.6"/>
<path class="cr" d="M270.74 236.35V238.77M272.35 235.24V237.17M273.15 234.08V235.51"/>
<path class="cb" d="M273.96 233.34V236.25M274.76 235.25V238.17"/>
<path class="cr" d="M275.56 237.29V238.51"/>
<path class="cb" d="M276.37 237.61V238.03"/>
<path class="cr" d="M277.18 235.27V238.91"/>
<path class="cb" d="M277.98 236.45V238.02M279.59 236.46V238.9"/>
<path class="cr" d="M282.81 237.66V238.54"/>
<path class="cb" d="M283.62 238.22V239M284.42 238.76V243"/>
<path class="cr" d="M285.23 241.05V243.38"/>
<path class="cy" d="M285.23 241.1h1.6"/>
<path class="cb" d="M286.84 240.52V243.52M287.64 243.22V244.65"/>
<path class="cr" d="M288.44 243.7V243.79M289.25 242.75V244.2M290.06 240.92V243.56"/>
<path class="cb" d="M290.86 241.48V244.03"/>
<path class="cr" d="M291.67 243.54V244.92M292.47 243.09V244.06"/>
<path class="cb" d="M293.28 242.24V245.05M294.08 243.88V247.28M294.88 245.04V247.58"/>
<path class="cy" d="M294.89 248.7h1.6"/>
<path class="cb" d="M296.5 246.96V251.29"/>
<path class="cr" d="M297.3 249.88V251.81"/>
<path class="cy" d="M297.31 252.21h1.6"/>
<path class="cr" d="M300.52 245.92V250.72"/>
<path class="cy" d="M300.53 246.28h1.6"/>
<path class="cb" d="M302.13 246.27V247.1M302.94 246.67V248.26"/>
<path class="cr" d="M303.74 244.1V247.7M304.55 245.03V245.63"/>
<path class="cb" d="M305.35 245.21V247.52"/>
<path class="cr" d="M306.16 244.83V246.1M307.77 246.29V248.04M308.57 246.67V246.87"/>
<path class="cb" d="M309.38 246.54V249.13"/>
<path class="cr" d="M310.18 247.69V249.39M310.99 246.89V248.68"/>
<path class="cb" d="M311.79 246.21V249.49"/>
<path class="cr" d="M312.6 247.08V249.79M313.4 246.13V249.36M314.21 245.04V247.39M315.01 243.9V246.37"/>
<path class="cb" d="M317.43 244.95V247.09M318.23 246.62V247.55"/>
<path class="cr" d="M319.84 241.08V246.76"/>
<path class="cb" d="M320.65 241.57V242.66"/>
<path class="cr" d="M321.45 238.78V242.98M322.25 238.35V240.65M323.06 235.23V239.01M323.87 235.55V237.65M324.67 233.49V237.57M325.48 230.99V234.95M326.28 229.95V231.93"/>
<path class="cb" d="M327.09 229.34V231.89"/>
<path class="cy" d="M327.09 231.21h1.6M327.89 231.39h1.6M328.7 232.33h1.6"/>
<path class="cr" d="M330.31 231.52V233.11"/>
<path class="cb" d="M332.72 231.9V232.67M333.53 231.8V235.62M335.94 231.51V232.69M336.75 231.58V235.31M337.55 232.54V235.01"/>
<path class="cr" d="M339.16 234.75V235.88"/>
<path class="cb" d="M339.97 235.24V236.26M340.77 235.35V238.27M341.58 236.33V243.1M343.19 241.86V243.73M343.99 242.62V243.58M344.8 243.09V245.02"/>
<path class="cr" d="M345.6 243.36V244.69"/>
<path class="cy" d="M345.61 245.19h1.6"/>
<path class="cr" d="M348.02 243.65V245.01M348.82 241.32V244.34M349.62 239.52V241.87M350.43 239.45V240.76"/>
<path class="cb" d="M351.24 239.64V241.29"/>
<path class="cr" d="M352.04 237.6V241.08"/>
<path class="cb" d="M353.65 237.69V239.89"/>
<path class="cr" d="M354.46 237.46V238.5"/>
<path class="cb" d="M355.26 237.71V240.51M356.06 237.1V240.94M356.87 240.16V241.87"/>
<path class="cr" d="M357.68 240.13V241.93"/>
<path class="cy" d="M357.68 240.8h1.6"/>
<path class="cb" d="M359.29 240.57V242.08"/>
<path class="cr" d="M360.09 240.12V241.89"/>
<path class="cb" d="M361.7 243.37V245.68M363.31 243.18V247.19M364.12 245.72V248.11"/>
<path class="cr" d="M367.34 245.49V250.54M368.14 245.2V246.92"/>
<path class="cb" d="M368.95 244.31V247.37"/>
<path class="cr" d="M369.75 246.1V247.9"/>
<path class="cy" d="M369.75 246h1.6"/>
<path class="cr" d="M372.17 244.28V246.5M373.78 242.46V245.32M375.39 241.44V245.15M377 237.19V238.66M377.8 236.8V237.74"/>
<path class="cb" d="M378.61 237.45V240.46"/>
<path class="cr" d="M379.41 237.28V239.85M380.22 237.8V239.2M381.02 237.96V238.4M381.83 236.08V238.86M382.63 236.9V237.88M383.44 235.39V238.39M384.24 234.16V237.14M385.05 233V234.5"/>
<path class="cy" d="M385.05 233.47h1.6"/>
<path class="cb" d="M386.66 232.52V234.62M387.46 234V236.78M389.07 233.94V237.93"/>
<path class="cr" d="M389.88 232.3V238.5M390.68 230.02V232.7"/>
<path class="cb" d="M391.49 229.75V231.85"/>
<path class="cr" d="M392.29 229.66V232.01"/>
<path class="cb" d="M393.1 229.62V231.98"/>
<path class="cr" d="M393.9 231.23V232.35"/>
<path class="cb" d="M395.51 228.66V230.34M397.12 230.95V232.69"/>
<path class="cr" d="M397.93 229.78V232.94M399.54 227.57V229.44"/>
<path class="cb" d="M400.34 228.34V230.91M401.15 230.61V232.54M402.76 227.62V229.66"/>
<path class="cy" d="M402.76 228.73h1.6"/>
<path class="cr" d="M404.37 225.68V229.5M405.98 223.81V226.7M407.59 219.64V223.34"/>
<path class="cb" d="M408.39 220.08V223.81M409.2 222.63V226.45"/>
<path class="cr" d="M410 224.88V226.39"/>
<path class="cy" d="M410 226.04h1.6"/>
<path class="cb" d="M411.61 223.92V227.88M412.42 227.45V229.24"/>
<path class="cr" d="M413.22 226.33V230.37"/>
<path class="cb" d="M414.03 226.44V227.19"/>
<path class="cr" d="M414.83 225.7V227.92M415.64 225.23V226.86"/>
<path class="cy" d="M416.44 225.69h1.6"/>
<path class="cb" d="M418.05 225.42V227.44"/>
<path class="cr" d="M418.86 226.66V228.14"/>
<path class="cb" d="M419.66 226.89V229.99M420.47 228.15V230.43"/>
<path class="cr" d="M421.27 228.46V230.67M422.08 226.19V230.37"/>
<path class="cb" d="M423.69 226.14V227.97M424.49 227.42V228.88M425.3 227.61V228.6"/>
<path class="cy" d="M425.3 226.81h1.6"/>
<path class="cr" d="M426.91 225.38V226.87"/>
<path class="cb" d="M427.71 224.87V227.32"/>
<path class="cy" d="M427.72 225.94h1.6"/>
<path class="cr" d="M429.32 224.98V226.48M430.12 224V226.88"/>
<path class="cy" d="M430.13 225.75h1.6M430.94 225.1h1.6"/>
<path class="cb" d="M433.35 223.98V228.13"/>
<path class="cr" d="M434.15 225.39V228.15"/>
<path class="cb" d="M434.96 226.21V228.91"/>
<path class="cr" d="M435.76 225.14V227.23"/>
<path class="cb" d="M436.56 225.95V227.63M437.37 226.2V227.66M438.18 226.41V230"/>
<path class="cy" d="M439.79 228.57h1.6"/>
<path class="cr" d="M441.4 227.53V229.68M442.2 227.3V228.39M443.01 227.36V227.81"/>
<path class="cb" d="M443.81 227.18V229.45M444.62 229.08V229.85"/>
<path class="cr" d="M445.42 228.08V229.72"/>
<path class="cb" d="M446.23 227.41V230.38"/>
<path class="cr" d="M447.03 228.32V230.17"/>
<path class="cb" d="M448.64 226.42V227.33"/>
<path class="cr" d="M449.45 225.64V227.9M450.25 224.61V226.5M451.06 223.35V225.08"/>
<path class="cb" d="M451.86 222.84V224.9"/>
<path class="cy" d="M451.87 224.2h1.6"/>
<path class="cr" d="M455.08 223.57V224.82M455.89 223.47V224.47M457.5 221.33V224.46M458.3 220.43V222.07"/>
<path class="cy" d="M458.31 220.31h1.6"/>
<path class="cr" d="M459.91 217.98V221.48M460.72 217.99V220.1M461.52 216.36V219.56M462.33 216.17V218.64M463.13 215.25V217.47"/>
<path class="cb" d="M463.94 215.56V216.7"/>
<path class="cr" d="M464.74 214.41V216.48M465.55 213.4V215.87M466.35 213.44V214.77"/>
<path class="cb" d="M467.16 213.9V215.05"/>
<path class="cy" d="M467.16 215.24h1.6"/>
<path class="cb" d="M468.77 215.01V217.78"/>
<path class="cr" d="M469.57 216.63V217.84"/>
<path class="cy" d="M469.57 217.86h1.6M470.38 218.68h1.6"/>
<path class="cb" d="M471.99 217.89V221.03"/>
<path class="cr" d="M472.79 217.84V220.83"/>
<path class="cb" d="M473.6 219.33V221.6"/>
<path class="cr" d="M474.4 219.36V221.85"/>
<path class="cb" d="M475.21 218.87V220.9"/>
<path class="cy" d="M476.02 218.54h1.6"/>
<path class="cr" d="M477.62 217.47V219.72"/>
<path class="cy" d="M477.62 217.61h1.6"/>
<path class="cr" d="M479.23 216.43V217.79M480.04 215.97V217.22"/>
<path class="cy" d="M480.85 217.44h1.6"/>
<path class="cr" d="M482.45 216.68V217.81"/>
<path class="cy" d="M483.26 215.51h1.6"/>
<path class="cr" d="M484.87 215.32V216.37M486.48 215.79V216.52"/>
<path class="cb" d="M487.28 215.73V218.03"/>
<path class="cy" d="M487.29 217.38h1.6"/>
<path class="cb" d="M488.89 216.49V218.11"/>
<path class="cy" d="M488.9 218.02h1.6M489.7 218.28h1.6"/>
<path class="cr" d="M492.11 217.7V219.45"/>
<path class="cb" d="M492.92 217.55V219.76"/>
<path class="cy" d="M492.92 219.41h1.6M493.73 218.89h1.6"/>
<path class="cb" d="M495.33 217.52V221.04M496.94 221.59V223.28M497.75 222.7V224.5M500.16 224.99V226.14"/>
<path class="cy" d="M500.17 224.21h1.6"/>
<path class="cr" d="M503.38 223.35V224.92"/>
<path class="cy" d="M503.38 223.88h1.6"/>
<path class="cb" d="M504.99 223.76V224.02M507.41 222.78V223.74"/>
<path class="cy" d="M507.41 223.59h1.6M509.02 222.01h1.6"/>
<path class="cr" d="M511.43 220.72V222.5"/>
<path class="cb" d="M513.04 219.49V220.89M515.46 219.2V221.95M517.07 219.9V222.32"/>
<path class="cy" d="M517.07 220.56h1.6M517.88 219.87h1.6M518.68 220.23h1.6M519.49 220.05h1.6M520.29 220.88h1.6M521.1 221.19h1.6M522.71 222.79h1.6M523.51 224.07h1.6M525.12 224.05h1.6"/>
<path class="cb" d="M526.73 222.85V224.94"/>
<path class="cr" d="M528.34 223.24V224.27"/>
<path class="cy" d="M531.56 227.72h1.6M532.37 226.86h1.6"/>
<path class="cb" d="M533.97 226.54V227.64"/>
<path class="cy" d="M533.98 227.17h1.6M536.39 227h1.6"/>
<path class="cb" d="M538 226.87V228.56"/>
<path class="cr" d="M538.8 227.29V228.25"/>
<path class="cy" d="M538.81 226.84h1.6M541.22 227.2h1.6"/>
<path class="cr" d="M542.83 226.96V228.01M544.44 224.56V225.65M545.24 223.61V226.51"/>
<path class="cy" d="M545.25 223.8h1.6"/>
<path class="cr" d="M547.66 220.13V222.23"/>
<path class="cy" d="M547.66 221.45h1.6"/>
<path class="cb" d="M549.26 220.1V222.11M550.07 221.01V222.27"/>
<path class="cr" d="M550.88 220.97V222.5"/>
<path class="cy" d="M550.88 221.99h1.6"/>
<path class="cb" d="M552.49 220.76V223.77"/>
<path class="cr" d="M553.29 221.58V224.17"/>
<path class="cy" d="M553.3 222.55h1.6M554.1 222.99h1.6"/>
<path class="cr" d="M556.51 221.1V223.82"/>
<path class="cy" d="M556.52 222.96h1.6"/>
<path class="cr" d="M558.12 221.6V223.23"/>
<path class="cy" d="M561.35 225.16h1.6M562.96 225.07h1.6M563.76 226.02h1.6"/>
<path class="cr" d="M565.37 224.65V226.2M566.98 225.34V226.18"/>
<path class="cy" d="M566.98 224.95h1.6M570.2 224.91h1.6"/>
<path class="cb" d="M572.61 223.3V226.09"/>
<path class="cy" d="M572.62 225.77h1.6M573.42 224.96h1.6"/>
<path class="cb" d="M575.03 224.69V227.2M575.83 226.68V228.77"/>
<path class="cr" d="M577.44 226.77V227.45"/>
<path class="cy" d="M578.25 227.03h1.6M579.06 227.04h1.6"/>
<path class="cb" d="M580.66 226.82V228.82"/>
<path class="cr" d="M583.08 227.03V227.95"/>
<path class="cb" d="M583.88 227.1V231.65"/>
<path class="cy" d="M586.3 228.51h1.6"/>
<path class="cr" d="M588.71 227.58V228.27"/>
<path class="cb" d="M592.74 227.37V229.26"/>
<path class="cr" d="M593.54 228.59V230.08"/>
<path class="cy" d="M595.16 230.15h1.6M597.57 229.36h1.6"/>
<path class="cb" d="M599.18 229.28V230.16M600.79 229.11V231.69"/>
<path class="cr" d="M602.39 229.53V231.18"/>
<path class="cb" d="M603.2 229.88V231.44"/>
<path class="cy" d="M603.21 231.94h1.6"/>
<path class="cr" d="M604.81 229.41V232.14"/>
<path class="cb" d="M605.62 228.69V230.65"/>
<path class="cr" d="M606.42 229.48V231.02"/>
<path class="cy" d="M606.43 229.23h1.6M609.65 228.1h1.6"/>
<path class="cb" d="M612.06 227.28V228.49"/>
<path class="cy" d="M612.06 228.6h1.6"/>
<path class="cr" d="M613.67 228.33V228.92"/>
<path class="cy" d="M613.67 227.91h1.6"/>
<path class="cb" d="M615.28 227.34V230.14"/>
<path class="cy" d="M620.11 224.13h1.6M620.92 223.94h1.6"/>
<path class="cr" d="M624.13 220.13V221.49"/>
<path class="cy" d="M624.94 221.41h1.6"/>
<path class="cb" d="M626.55 221.21V224.73"/>
<path class="cy" d="M628.16 228.07h1.6"/>
<path class="cr" d="M629.76 226.2V228.48"/>
<path class="cy" d="M632.19 227.47h1.6"/>
<path class="cr" d="M635.4 229.29V233.47"/>
<path class="cy" d="M637.82 234.34h1.6M638.63 234.97h1.6"/>
<path class="cr" d="M641.84 236.05V238.53M642.64 234.64V237.1"/>
<path class="cy" d="M643.46 231.91h1.6"/>
<path class="cr" d="M645.06 230.97V232.13M646.67 228.47V231.91"/>
<path class="cb" d="M647.48 228.87V230.58M648.28 229.29V231.75"/>
<path class="cy" d="M648.29 230.66h1.6"/>
<path class="cb" d="M649.89 230.25V233.45M650.7 232.73V237.05"/>
<path class="cr" d="M651.5 233.04V236.07"/>
<path class="cb" d="M652.31 233.35V235.22"/>
<path class="cr" d="M653.11 233.53V235.51M654.72 235.19V236.85"/>
<path class="cb" d="M655.53 236.09V236.76M656.33 235.91V239.01M657.94 242.22V244.96M658.75 243.31V248.4"/>
<path class="cy" d="M659.56 247.56h1.6"/>
<path class="cr" d="M661.97 243.25V247.26M662.77 243.47V245.2"/>
<path class="cb" d="M663.58 242.58V245.73M664.38 245.18V246.35M665.19 244.04V248.57"/>
<path class="cy" d="M666 245.35h1.6M667.61 245.07h1.6M668.41 245.81h1.6"/>
<path class="cr" d="M670.82 244.38V247.78M671.62 244.42V245.29"/>
<path class="cb" d="M673.24 242.93V244.81"/>
<path class="cr" d="M674.04 242.95V244.6M674.85 240.43V244.57M675.65 240.39V241.78M676.46 238.8V241.14"/>
<path class="cb" d="M677.26 239.22V241.24"/>
<path class="cr" d="M678.07 239.86V240.43M679.68 236.85V239.17M681.29 235.66V238.53M682.09 235.49V236.98M682.9 234.12V236.07M684.5 232.57V234.89"/>
<path class="cb" d="M685.31 232.74V234.96"/>
<path class="cr" d="M686.12 232.23V233.78"/>
<path class="cb" d="M686.92 232.42V234.01M688.53 234.41V236.82"/>
<path class="cr" d="M689.34 235.41V236.94M690.14 235.05V237.01"/>
<path class="cb" d="M691.75 234.98V237.05"/>
<path class="cr" d="M692.56 234.37V238.14"/>
<path class="cb" d="M693.36 235.13V238.44"/>
<path class="cr" d="M694.17 236.91V240.04M694.97 236.41V237.18"/>
<path class="cy" d="M694.98 237.64h1.6"/>
<path class="cr" d="M696.58 235.01V237.9M697.38 236.46V237.28"/>
<path class="cy" d="M697.39 237.03h1.6"/>
<path class="cr" d="M699 234.07V237.1"/>
<path class="cb" d="M700.61 233.6V238.06"/>
<path class="cr" d="M701.41 235.33V237.18"/>
<path class="cb" d="M702.22 235.64V239.05"/>
<path class="cy" d="M702.22 236.74h1.6"/>
<path class="cb" d="M703.83 236.69V239.49"/>
<path class="cr" d="M705.44 237.24V239.28"/>
<path class="cb" d="M707.05 236.58V240.58M707.85 240.13V242.99M709.46 241.42V246.31M710.26 245.79V248.24"/>
<path class="cr" d="M711.88 245.14V247.24M712.68 243.54V245.83M714.29 242.76V245.48"/>
<path class="cb" d="M715.1 242.88V244.68M715.9 244.14V246.27"/>
<path class="cr" d="M716.71 244.27V245.86M718.32 243.91V246.11M719.12 244.05V246.63M719.93 244.63V245.14"/>
<path class="cy" d="M720.74 245.31h1.6"/>
<path class="cr" d="M722.34 243.63V246.96"/>
<path class="cb" d="M723.15 244.2V249.51M724.75 249.89V253.95M725.56 252.44V255.44M726.37 253.85V258.57M727.17 257.93V260.82"/>
<path class="cr" d="M727.98 257.73V259.28M728.78 255.79V260.04M729.59 256.23V258.58M731.2 257.64V258.76M732 256.72V258.02"/>
<path class="cb" d="M732.81 256.53V258.99"/>
<path class="cy" d="M732.81 258.18h1.6"/>
<path class="cb" d="M734.42 258.07V258.61M736.83 255.46V257.99"/>
<path class="cr" d="M738.44 257.79V259.55M739.25 256.43V259.23"/>
<path class="cb" d="M740.86 257.81V260.36M742.47 257.02V259.31"/>
<path class="cr" d="M743.27 256.96V259.01"/>
<path class="cy" d="M743.28 256.78h1.6"/>
<path class="cr" d="M744.88 253.58V257.42"/>
<path class="cy" d="M745.69 252.41h1.6M746.5 253.66h1.6M747.3 252.79h1.6M749.72 249.63h1.6"/>
<path class="cb" d="M751.32 249.46V249.94"/>
<path class="cy" d="M752.94 252.24h1.6"/>
<path class="cb" d="M754.54 252.19V255.14"/>
<path class="cy" d="M754.55 253.26h1.6M755.35 253.07h1.6M756.96 251.82h1.6M757.77 253.25h1.6"/>
<path class="cr" d="M762.59 250.63V253.77"/>
<path class="cy" d="M762.6 251.22h1.6M764.21 254.58h1.6"/>
<path class="cr" d="M769.84 251.14V253.86M774.67 251.26V252.55"/>
<path class="cy" d="M774.67 251.02h1.6"/>
<path class="cb" d="M776.28 250.72V252.07"/>
<path class="cr" d="M777.88 250.83V251.83"/>
<path class="cy" d="M777.89 250.06h1.6"/>
<path class="cr" d="M781.11 243.86V247.07M782.72 242.29V244.76"/>
<path class="cy" d="M782.72 243.14h1.6"/>
<path class="cr" d="M785.94 239.94V241.84"/>
<path class="cb" d="M788.35 242.49V245.31"/>
<path class="cr" d="M789.16 242.86V244.44"/>
<path class="cy" d="M790.77 245.05h1.6M792.38 243.83h1.6"/>
<path class="cb" d="M794.79 244.04V245.4M796.4 244.46V245.98"/>
<path class="cy" d="M796.41 246h1.6"/>
<path class="cr" d="M798.01 245.49V246.63"/>
<path class="cy" d="M798.82 244.93h1.6"/>
<path class="cr" d="M800.43 243.83V245.63"/>
<path class="cy" d="M802.04 240.94h1.6"/>
<path class="cb" d="M804.45 241.11V244.39"/>
<path class="cr" d="M805.25 242.98V243.55M806.06 240.92V243.09M810.89 237.98V241.7"/>
<path class="cy" d="M811.7 238.67h1.6"/>
<path class="cb" d="M813.31 238.63V239.32"/>
<path class="cy" d="M813.31 238.36h1.6"/>
<path class="cb" d="M814.92 237.53V239.68"/>
<path class="cy" d="M814.92 239.83h1.6"/>
<path class="cr" d="M816.53 238.4V240.28"/>
<path class="cy" d="M816.53 238.93h1.6M821.36 235.04h1.6"/>
<path class="cr" d="M822.97 233.47V235.42M824.58 233.57V235"/>
<path class="cb" d="M826.99 232.98V236.43"/>
<path class="cy" d="M829.41 238.4h1.6M831.02 239.67h1.6"/>
<path class="cr" d="M838.26 234.54V235.51M839.07 232.76V235.2"/>
<path class="cb" d="M839.87 231.83V234.3"/>
<path class="cy" d="M839.88 234.72h1.6M840.68 232.92h1.6M841.49 232.24h1.6M843.1 234.6h1.6"/>
<path class="cr" d="M847.92 236.53V238.05"/>
<path class="cy" d="M848.73 237.27h1.6"/>
<path class="cb" d="M868.85 242.16V245.06"/>
<path class="cr" d="M872.07 245.23V246.35"/>
<path class="cy" d="M876.1 247.28h1.6M878.52 246.11h1.6M880.93 246.77h1.6M884.15 244.7h1.6"/>
<path class="cr" d="M890.59 242.48V243.42"/>
<path class="cy" d="M893.01 241.8h1.6M895.42 240.46h1.6"/>
<path class="cb" d="M898.64 239.65V239.92"/>
<path class="cr" d="M901.86 236.96V239.4"/>
<path class="cy" d="M903.47 237.66h1.6M906.69 240.44h1.6"/>
<path class="cr" d="M911.52 237.6V238.94"/>
<path class="cy" d="M914.74 236.34h1.6"/>
<path class="cb" d="M917.15 236.5V238.7"/>
<path class="cy" d="M917.96 238.92h1.6M934.06 236.59h1.6M935.67 236.32h1.6M937.28 233.51h1.6"/>
<path class="cb" d="M939.69 234.22V236.48"/>
<path class="cy" d="M940.5 235.5h1.6M942.92 233.72h1.6"/>
<path class="cr" d="M945.33 235.31V236.47"/>
<path class="cy" d="M946.94 234.94h1.6M948.55 234.36h1.6"/>
<path class="cr" d="M950.16 233.43V235.7"/>
<path class="cb" d="M951.77 232.16V234.77"/>
<path class="cy" d="M956.6 232.92h1.6M959.02 232.51h1.6"/>
<path class="cr" d="M960.62 230.45V232.71"/>
<path class="cb" d="M963.04 231.74V232.43M966.26 229.44V233.95"/>
<path class="cr" d="M967.87 231.21V231.82"/>
<path d="M6.7 336h1.6M18 336.2h1.6M26.8 335h1.6M31.4 335.6h1.4M34.4 334.6h1.6" stroke="#d9c850" stroke-width="1.15" fill="none"/>
<path d="M971.6 205.8V344.7H5.9" fill="none" stroke="#d8d8d8" stroke-width="1.1"/>
<rect x="5" y="205.8" width="967.1" height="0.8" fill="#8e8e8e"/>
<text x="6.5" y="215.8" font-family="'Liberation Sans','Noto Sans CJK JP',sans-serif" font-size="9.6" fill="#e6e6e6" stroke="#e6e6e6" stroke-width="0.1">時刻</text>
<text x="60.2" y="215.8" font-family="'Liberation Sans','Noto Sans CJK JP',sans-serif" font-size="9.6" fill="#e6e6e6" stroke="#e6e6e6" stroke-width="0.1">始値</text>
<text x="114.2" y="215.8" font-family="'Liberation Sans','Noto Sans CJK JP',sans-serif" font-size="9.6" fill="#e6e6e6" stroke="#e6e6e6" stroke-width="0.1">高値</text>
<text x="168" y="215.8" font-family="'Liberation Sans','Noto Sans CJK JP',sans-serif" font-size="9.6" fill="#e6e6e6" stroke="#e6e6e6" stroke-width="0.1">安値</text>
<text x="221.8" y="215.8" font-family="'Liberation Sans','Noto Sans CJK JP',sans-serif" font-size="9.6" fill="#e6e6e6" stroke="#e6e6e6" stroke-width="0.1">終値</text>
<text style="will-change:transform" transform="scale(0.82,1)" x="34.45 40.43 46.4 52.38 58.35 64.33 100.18 106.16 112.13 118.11 124.09 130.06 165.91 171.89 177.87 183.84 189.82 195.79 231.65 237.62 243.6 249.57 255.55 261.52 297.38 303.35 309.33 315.3 321.28 327.26" y="215.5" text-anchor="middle" font-family="Liberation Sans, sans-serif" font-size="9.6"  fill="#e6e6e6" stroke="#e6e6e6" stroke-width="0.12">:06:00:8,898:8,898:8,898:8,898</text>
<text style="will-change:transform" transform="scale(0.82,1)" x="852.5 858.48" y="340.8" text-anchor="middle" font-family="Liberation Sans, sans-serif" font-size="9.6"  fill="#d6d6d6" stroke="#d6d6d6" stroke-width="0.17">18</text>
<text style="will-change:transform" transform="scale(0.82,1)" x="15.06 21.04" y="352.9" text-anchor="middle" font-family="Liberation Sans, sans-serif" font-size="9.6"  fill="#d6d6d6" stroke="#d6d6d6" stroke-width="0.17">05</text>
<text style="will-change:transform" transform="scale(0.82,1)" x="37.87 43.84" y="352.9" text-anchor="middle" font-family="Liberation Sans, sans-serif" font-size="9.6" font-weight="bold" fill="#ffffff" stroke="#ffffff" stroke-width="0.17">06</text>
<text style="will-change:transform" transform="scale(0.82,1)" x="69.02 75" y="352.9" text-anchor="middle" font-family="Liberation Sans, sans-serif" font-size="9.6"  fill="#d6d6d6" stroke="#d6d6d6" stroke-width="0.17">09</text>
<text style="will-change:transform" transform="scale(0.82,1)" x="127.26 133.23" y="352.9" text-anchor="middle" font-family="Liberation Sans, sans-serif" font-size="9.6"  fill="#d6d6d6" stroke="#d6d6d6" stroke-width="0.17">10</text>
<text style="will-change:transform" transform="scale(0.82,1)" x="186.4 192.38" y="352.9" text-anchor="middle" font-family="Liberation Sans, sans-serif" font-size="9.6"  fill="#d6d6d6" stroke="#d6d6d6" stroke-width="0.17">11</text>
<text style="will-change:transform" transform="scale(0.82,1)" x="245.24 251.22" y="352.9" text-anchor="middle" font-family="Liberation Sans, sans-serif" font-size="9.6"  fill="#d6d6d6" stroke="#d6d6d6" stroke-width="0.17">12</text>
<text style="will-change:transform" transform="scale(0.82,1)" x="303.78 309.76" y="352.9" text-anchor="middle" font-family="Liberation Sans, sans-serif" font-size="9.6"  fill="#d6d6d6" stroke="#d6d6d6" stroke-width="0.17">13</text>
<text style="will-change:transform" transform="scale(0.82,1)" x="363.23 369.21" y="352.9" text-anchor="middle" font-family="Liberation Sans, sans-serif" font-size="9.6"  fill="#d6d6d6" stroke="#d6d6d6" stroke-width="0.17">14</text>
<text style="will-change:transform" transform="scale(0.82,1)" x="421.77 427.74" y="352.9" text-anchor="middle" font-family="Liberation Sans, sans-serif" font-size="9.6"  fill="#d6d6d6" stroke="#d6d6d6" stroke-width="0.17">15</text>
<text style="will-change:transform" transform="scale(0.82,1)" x="462.32 468.29" y="352.9" text-anchor="middle" font-family="Liberation Sans, sans-serif" font-size="9.6"  fill="#d6d6d6" stroke="#d6d6d6" stroke-width="0.17">17</text>
<text style="will-change:transform" transform="scale(0.82,1)" x="521.16 527.13" y="352.9" text-anchor="middle" font-family="Liberation Sans, sans-serif" font-size="9.6"  fill="#d6d6d6" stroke="#d6d6d6" stroke-width="0.17">18</text>
<text style="will-change:transform" transform="scale(0.82,1)" x="580.3 586.28" y="352.9" text-anchor="middle" font-family="Liberation Sans, sans-serif" font-size="9.6"  fill="#d6d6d6" stroke="#d6d6d6" stroke-width="0.17">19</text>
<text style="will-change:transform" transform="scale(0.82,1)" x="634.57 640.55" y="352.9" text-anchor="middle" font-family="Liberation Sans, sans-serif" font-size="9.6"  fill="#d6d6d6" stroke="#d6d6d6" stroke-width="0.17">20</text>
<text style="will-change:transform" transform="scale(0.82,1)" x="681.83 687.8" y="352.9" text-anchor="middle" font-family="Liberation Sans, sans-serif" font-size="9.6"  fill="#d6d6d6" stroke="#d6d6d6" stroke-width="0.17">21</text>
<text style="will-change:transform" transform="scale(0.82,1)" x="733.66 739.63" y="352.9" text-anchor="middle" font-family="Liberation Sans, sans-serif" font-size="9.6"  fill="#d6d6d6" stroke="#d6d6d6" stroke-width="0.17">22</text>
<text style="will-change:transform" transform="scale(0.82,1)" x="792.5 798.48" y="352.9" text-anchor="middle" font-family="Liberation Sans, sans-serif" font-size="9.6"  fill="#d6d6d6" stroke="#d6d6d6" stroke-width="0.17">23</text>
<text style="will-change:transform" transform="scale(0.82,1)" x="851.65 857.62" y="352.9" text-anchor="middle" font-family="Liberation Sans, sans-serif" font-size="9.6"  fill="#d6d6d6" stroke="#d6d6d6" stroke-width="0.17">00</text>
<text style="will-change:transform" transform="scale(0.82,1)" x="910.49 916.46" y="352.9" text-anchor="middle" font-family="Liberation Sans, sans-serif" font-size="9.6"  fill="#d6d6d6" stroke="#d6d6d6" stroke-width="0.17">01</text>
<text style="will-change:transform" transform="scale(0.82,1)" x="969.94 975.91" y="352.9" text-anchor="middle" font-family="Liberation Sans, sans-serif" font-size="9.6"  fill="#d6d6d6" stroke="#d6d6d6" stroke-width="0.17">02</text>
<text style="will-change:transform" transform="scale(0.82,1)" x="1024.82 1030.79" y="352.9" text-anchor="middle" font-family="Liberation Sans, sans-serif" font-size="9.6"  fill="#d6d6d6" stroke="#d6d6d6" stroke-width="0.17">03</text>
<text style="will-change:transform" transform="scale(0.82,1)" x="1082.74 1088.72" y="352.9" text-anchor="middle" font-family="Liberation Sans, sans-serif" font-size="9.6"  fill="#d6d6d6" stroke="#d6d6d6" stroke-width="0.17">04</text>
<text style="will-change:transform" transform="scale(0.82,1)" x="1136.1 1142.07" y="352.9" text-anchor="middle" font-family="Liberation Sans, sans-serif" font-size="9.6"  fill="#d6d6d6" stroke="#d6d6d6" stroke-width="0.17">05</text>
<text style="will-change:transform" transform="scale(0.82,1)" x="1169.57 1175.55" y="352.9" text-anchor="middle" font-family="Liberation Sans, sans-serif" font-size="9.6"  fill="#d6d6d6" stroke="#d6d6d6" stroke-width="0.17">06</text>
<text style="will-change:transform" transform="scale(0.82,1)" x="1189.21 1195.18 1201.16 1207.13 1213.11" y="226.85" text-anchor="middle" font-family="Liberation Sans, sans-serif" font-size="9.6"  fill="#c4c4c4" stroke="#c4c4c4" stroke-width="0.17">8,900</text>
<text style="will-change:transform" transform="scale(0.82,1)" x="1189.21 1195.18 1201.16 1207.13 1213.11" y="250.85" text-anchor="middle" font-family="Liberation Sans, sans-serif" font-size="9.6"  fill="#c4c4c4" stroke="#c4c4c4" stroke-width="0.17">8,800</text>
<text style="will-change:transform" transform="scale(0.82,1)" x="1189.21 1195.18 1201.16 1207.13 1213.11" y="274.65" text-anchor="middle" font-family="Liberation Sans, sans-serif" font-size="9.6"  fill="#c4c4c4" stroke="#c4c4c4" stroke-width="0.17">8,700</text>
<text style="will-change:transform" transform="scale(0.82,1)" x="1189.21 1195.18 1201.16 1207.13 1213.11" y="298.45" text-anchor="middle" font-family="Liberation Sans, sans-serif" font-size="9.6"  fill="#c4c4c4" stroke="#c4c4c4" stroke-width="0.17">8,600</text>
<text style="will-change:transform" transform="scale(0.82,1)" x="1189.21 1195.18 1201.16 1207.13 1213.11" y="321.95" text-anchor="middle" font-family="Liberation Sans, sans-serif" font-size="9.6"  fill="#c4c4c4" stroke="#c4c4c4" stroke-width="0.17">8,500</text>
<text style="will-change:transform" transform="scale(0.82,1)" x="1189.21 1195.18 1201.16 1207.13 1213.11" y="345.75" text-anchor="middle" font-family="Liberation Sans, sans-serif" font-size="9.6"  fill="#c4c4c4" stroke="#c4c4c4" stroke-width="0.17">8,400</text>
<rect x="972.1" y="222.1" width="47.2" height="16.1" fill="#dedede"/>
<text style="will-change:transform" transform="scale(0.84,1)" x="1173.21 1179.29 1185.36 1191.43 1197.5" y="232.9" text-anchor="middle" font-family="Liberation Sans, sans-serif" font-size="10" font-weight="bold" fill="#000" stroke="#000" stroke-width="0.18">8,898</text>
<rect x="5" y="357.4" width="1014.3" height="4.2" fill="url(#gsep)"/>
<rect x="5" y="361.6" width="1014.3" height="185.2" fill="#1b1b1b"/>
<rect x="5.9" y="361.6" width="965.3" height="173" fill="#000"/>
<g stroke="#fff" stroke-opacity="0.2" stroke-width="1.5" fill="none">
<line x1="9.5" y1="361.6" x2="9.5" y2="534.6"/>
<line x1="40.5" y1="361.6" x2="40.5" y2="534.6"/>
<line x1="53.75" y1="361.6" x2="53.75" y2="534.6"/>
<line x1="101.5" y1="361.6" x2="101.5" y2="534.6"/>
<line x1="150" y1="361.6" x2="150" y2="534.6"/>
<line x1="198.25" y1="361.6" x2="198.25" y2="534.6"/>
<line x1="246.25" y1="361.6" x2="246.25" y2="534.6"/>
<line x1="295" y1="361.6" x2="295" y2="534.6"/>
<line x1="343" y1="361.6" x2="343" y2="534.6"/>
<line x1="376.25" y1="361.6" x2="376.25" y2="534.6"/>
<line x1="424.5" y1="361.6" x2="424.5" y2="534.6"/>
<line x1="473" y1="361.6" x2="473" y2="534.6"/>
<line x1="517.5" y1="361.6" x2="517.5" y2="534.6"/>
<line x1="556.25" y1="361.6" x2="556.25" y2="534.6"/>
<line x1="598.75" y1="361.6" x2="598.75" y2="534.6"/>
<line x1="647" y1="361.6" x2="647" y2="534.6"/>
<line x1="695.5" y1="361.6" x2="695.5" y2="534.6"/>
<line x1="743.75" y1="361.6" x2="743.75" y2="534.6"/>
<line x1="792.5" y1="361.6" x2="792.5" y2="534.6"/>
<line x1="837.5" y1="361.6" x2="837.5" y2="534.6"/>
<line x1="885" y1="361.6" x2="885" y2="534.6"/>
<line x1="928.75" y1="361.6" x2="928.75" y2="534.6"/>
<line x1="968.75" y1="361.6" x2="968.75" y2="534.6"/>
<line x1="5.9" y1="371.6" x2="971.2" y2="371.6"/>
<line x1="5.9" y1="413.7" x2="971.2" y2="413.7"/>
<line x1="5.9" y1="456.3" x2="971.2" y2="456.3"/>
<line x1="5.9" y1="498.2" x2="971.2" y2="498.2"/>
</g>
<g stroke="#fff" stroke-opacity="0.3" stroke-width="1.0" stroke-dasharray="0.82 0.82" fill="none">
<line x1="9.5" y1="361.6" x2="9.5" y2="534.6"/>
<line x1="40.5" y1="361.6" x2="40.5" y2="534.6"/>
<line x1="53.75" y1="361.6" x2="53.75" y2="534.6"/>
<line x1="101.5" y1="361.6" x2="101.5" y2="534.6"/>
<line x1="150" y1="361.6" x2="150" y2="534.6"/>
<line x1="198.25" y1="361.6" x2="198.25" y2="534.6"/>
<line x1="246.25" y1="361.6" x2="246.25" y2="534.6"/>
<line x1="295" y1="361.6" x2="295" y2="534.6"/>
<line x1="343" y1="361.6" x2="343" y2="534.6"/>
<line x1="376.25" y1="361.6" x2="376.25" y2="534.6"/>
<line x1="424.5" y1="361.6" x2="424.5" y2="534.6"/>
<line x1="473" y1="361.6" x2="473" y2="534.6"/>
<line x1="517.5" y1="361.6" x2="517.5" y2="534.6"/>
<line x1="556.25" y1="361.6" x2="556.25" y2="534.6"/>
<line x1="598.75" y1="361.6" x2="598.75" y2="534.6"/>
<line x1="647" y1="361.6" x2="647" y2="534.6"/>
<line x1="695.5" y1="361.6" x2="695.5" y2="534.6"/>
<line x1="743.75" y1="361.6" x2="743.75" y2="534.6"/>
<line x1="792.5" y1="361.6" x2="792.5" y2="534.6"/>
<line x1="837.5" y1="361.6" x2="837.5" y2="534.6"/>
<line x1="885" y1="361.6" x2="885" y2="534.6"/>
<line x1="928.75" y1="361.6" x2="928.75" y2="534.6"/>
<line x1="968.75" y1="361.6" x2="968.75" y2="534.6"/>
<line x1="5.9" y1="371.6" x2="971.2" y2="371.6"/>
<line x1="5.9" y1="413.7" x2="971.2" y2="413.7"/>
<line x1="5.9" y1="456.3" x2="971.2" y2="456.3"/>
<line x1="5.9" y1="498.2" x2="971.2" y2="498.2"/>
</g>
<polyline fill="none" stroke="#ff0000" stroke-width="1.65" stroke-linejoin="round" points="7.5,378.31 8.3,376.06 9.11,373.43 9.91,374.48 10.72,375.4 11.53,373.15 12.33,374.78 13.14,371.91 13.94,369.8 14.75,371.93 15.55,377.01 16.36,374.78 17.16,376.26 17.96,377.03 18.77,377.62 19.58,379.67 20.38,379.44 21.19,379.07 21.99,376.19 22.8,377.96 23.6,378.86 24.41,374.89 25.21,377.19 26.02,376.19 26.82,373.18 27.62,376.45 28.43,380.23 29.24,377.78 30.04,381.38 30.85,380.57 31.65,379.24 32.45,378.13 33.26,375.74 34.06,373.75 34.87,373.26 35.67,372.22 36.48,378.21 37.28,382.57 38.09,385.91 38.9,386.22 39.7,386.71 40.51,381.84 41.31,376.58 42.12,381.87 42.92,386.95 43.73,386.52 44.53,391.09 45.34,393.73 46.14,395.19 46.95,398.27 47.75,405.31 48.55,411.39 49.36,415.2 50.16,419.08 50.97,423.52 51.78,425.13 52.58,425.52 53.39,429.58 54.19,428.34 55,426.8 55.8,423.55 56.61,421.94 57.41,420.31 58.22,418.78 59.02,418.12 59.83,417.04 60.63,413.22 61.44,415.81 62.24,417.16 63.05,419.09 63.85,419.86 64.66,424.28 65.46,423.96 66.27,422.45 67.07,419.37 67.88,419.34 68.68,418.69 69.49,416.31 70.29,415.34 71.09,411.02 71.9,410.52 72.7,412.19 73.51,410.83 74.31,409.44 75.12,410.02 75.92,407.88 76.73,411.66 77.54,414.75 78.34,416.64 79.15,416.79 79.95,412.83 80.76,414.21 81.56,411.39 82.37,413.81 83.17,416.65 83.98,414.95 84.78,415.42 85.59,414.83 86.39,413.93 87.2,413.26 88,414.32 88.81,413.74 89.61,419.77 90.42,418.1 91.22,414.13 92.03,416.5 92.83,418.9 93.64,427.62 94.44,427.45 95.25,428.45 96.05,426.11 96.86,423.93 97.66,427.44 98.47,428.86 99.27,427.68 100.08,433.53 100.88,438.37 101.69,443.3 102.49,441.83 103.3,442.57 104.1,450.41 104.91,451.35 105.71,450.99 106.52,455.34 107.32,458.14 108.12,459.57 108.93,459.96 109.73,457.16 110.54,455.22 111.35,449.66 112.15,447.96 112.96,449.12 113.76,450.63 114.57,449.05 115.37,449.71 116.18,452.42 116.98,457.69 117.79,459.39 118.59,461.07 119.4,461.73 120.2,466.48 121.01,473.81 121.81,472.2 122.62,479.54 123.42,475.27 124.23,477.58 125.03,484.21 125.84,483.06 126.64,482.45 127.45,481.94 128.25,475.29 129.06,473.39 129.86,471.57 130.67,476.04 131.47,475.52 132.28,476.82 133.08,477.46 133.88,479.81 134.69,481.22 135.5,482.07 136.3,478.64 137.11,478.35 137.91,477.59 138.72,483.52 139.52,481.97 140.33,484.78 141.13,488.99 141.94,487.93 142.74,486.56 143.55,484.12 144.35,482.72 145.16,480 145.96,478.24 146.77,477.63 147.57,476.18 148.38,473.74 149.18,477.83 149.99,472.11 150.79,474.72 151.59,471.85 152.4,473.07 153.21,468.78 154.01,466.94 154.81,468.86 155.62,464.65 156.43,466.65 157.23,470.84 158.03,470.94 158.84,467.49 159.65,465.55 160.45,465.54 161.25,467.76 162.06,464.92 162.87,468.37 163.67,465.83 164.48,469.36 165.28,470.41 166.09,470.22 166.89,473.64 167.7,469.65 168.5,468.19 169.31,468.63 170.11,463.93 170.92,465.66 171.72,467.9 172.53,467.42 173.33,467.35 174.14,468.13 174.94,470.77 175.75,470.12 176.55,472.13 177.36,468.67 178.16,469.86 178.97,472.16 179.77,468.73 180.58,470.87 181.38,468.77 182.19,469.4 182.99,465.87 183.8,465.55 184.6,464.13 185.41,468.4 186.21,468.38 187.02,469.7 187.82,469.48 188.62,473.35 189.43,472.92 190.24,474.61 191.04,472.06 191.84,472.67 192.65,475.19 193.46,477.92 194.26,478.75 195.06,476.79 195.87,476.46 196.68,475.64 197.48,472.31 198.29,472.55 199.09,469.9 199.9,467.98 200.7,468.76 201.51,468.72 202.31,468.21 203.12,469.32 203.92,463.27 204.73,463.73 205.53,465.17 206.34,468.51 207.14,468.33 207.95,466.95 208.75,469.07 209.56,467.81 210.36,466.19 211.17,469.14 211.97,468.91 212.78,465.77 213.58,465.91 214.39,464.69 215.19,463.97 216,463.35 216.8,463.64 217.61,462.61 218.41,464.02 219.22,464.88 220.02,463.11 220.83,459.94 221.63,463.02 222.44,460.9 223.24,463.83 224.05,463.3 224.85,463.33 225.66,467.44 226.46,465 227.27,467.62 228.07,470.01 228.88,470.16 229.68,470.54 230.49,469.32 231.29,473.9 232.1,471.16 232.9,467.05 233.71,468.16 234.51,469.9 235.32,467.24 236.12,464.62 236.93,463.05 237.73,462.7 238.54,461.78 239.34,461.25 240.15,461.87 240.95,461.45 241.76,463.54 242.56,461.64 243.37,461.74 244.17,458.78 244.98,456.41 245.78,463.57 246.59,464.56 247.39,464.5 248.2,465.29 249,469.38 249.81,485.2 250.61,488.76 251.42,496.23 252.22,495.31 253.03,492.18 253.83,487.09 254.64,487.6 255.44,488.32 256.25,491.97 257.05,494.48 257.86,490.82 258.66,490.35 259.47,490.37 260.27,487.67 261.08,490.92 261.88,487.23 262.69,488.22 263.49,487.04 264.3,486.28 265.1,484.65 265.91,484.6 266.71,488.7 267.52,490.13 268.32,490.76 269.12,489.97 269.93,490.58 270.74,493.22 271.54,493.75 272.35,496.17 273.15,493.89 273.96,497.64 274.76,491.97 275.56,485.77 276.37,488.14 277.18,490.36 277.98,485.24 278.79,487.01 279.59,481.23 280.4,481.71 281.2,479.03 282,477.54 282.81,473.46 283.62,476.23 284.42,469.43 285.23,473.08 286.03,468.56 286.84,467.49 287.64,463.38 288.44,464.74 289.25,464.92 290.06,462.74 290.86,462.73 291.67,463.66 292.47,466.68 293.28,467.19 294.08,462.55 294.88,460.45 295.69,460.28 296.5,463.42 297.3,459.29 298.11,460.27 298.91,464.65 299.72,463.34 300.52,462.47 301.33,461.43 302.13,464.38 302.94,464.05 303.74,468.79 304.55,464.96 305.35,463.87 306.16,462.54 306.96,463.01 307.77,462.7 308.57,463.01 309.38,456.62 310.18,454.61 310.99,456.62 311.79,459.55 312.6,460.69 313.4,458.72 314.21,459.18 315.01,456.36 315.81,457.54 316.62,456.95 317.43,458.4 318.23,461.37 319.04,464.69 319.84,470.35 320.65,470.54 321.45,470.27 322.25,474.24 323.06,476.78 323.87,477.74 324.67,482.61 325.48,481.17 326.28,483.33 327.09,483.91 327.89,481.2 328.69,482.03 329.5,481.49 330.31,482.59 331.11,476.34 331.92,473.77 332.72,477.86 333.53,478.07 334.33,478.06 335.14,477.56 335.94,477.36 336.75,478.08 337.55,478.79 338.36,477.61 339.16,478.98 339.97,476.67 340.77,476.72 341.58,474.19 342.38,469.01 343.19,466.85 343.99,465.21 344.8,464.97 345.6,463.65 346.41,467.57 347.21,465.36 348.02,465.94 348.82,464.33 349.62,465.84 350.43,467.03 351.24,468.58 352.04,467.69 352.85,463.83 353.65,466.69 354.46,465.59 355.26,465.34 356.06,464.66 356.87,463.07 357.68,465.53 358.48,465.01 359.29,466.37 360.09,469.84 360.9,466.63 361.7,465.52 362.5,464.9 363.31,458.71 364.12,458.3 364.92,461.02 365.73,462.48 366.53,460.72 367.34,457.68 368.14,462.5 368.95,466.05 369.75,463.32 370.56,467.11 371.36,466.18 372.17,465.42 372.97,469.31 373.78,468.5 374.58,466.8 375.39,465.26 376.19,463.45 377,479.18 377.8,484.18 378.61,488.32 379.41,486.93 380.22,486.94 381.02,485.34 381.83,489.65 382.63,495.29 383.44,502.74 384.24,502.36 385.05,496.24 385.85,494.45 386.66,492.81 387.46,496.28 388.27,495.92 389.07,497.87 389.88,497.6 390.68,492.59 391.49,494.53 392.29,498.19 393.1,496.52 393.9,500.21 394.71,499.12 395.51,500.79 396.31,502.03 397.12,501.15 397.93,499.34 398.73,500.11 399.54,500.32 400.34,499.01 401.15,505.19 401.95,506.37 402.76,509.43 403.56,513.76 404.37,510.27 405.17,513.37 405.98,506.2 406.78,505.75 407.59,506.34 408.39,504.82 409.2,506.97 410,505.48 410.81,509.84 411.61,509.64 412.42,515.23 413.22,513.22 414.03,513.44 414.83,510.32 415.64,505.99 416.44,504 417.25,500.52 418.05,498.78 418.86,500.72 419.66,499.73 420.47,502.19 421.27,502.77 422.08,497.28 422.88,497.08 423.69,496.67 424.49,494.66 425.3,498.72 426.1,495.23 426.91,498.12 427.71,503.2 428.52,501.05 429.32,500.29 430.12,501.69 430.93,501.58 431.74,500.34 432.54,499.04 433.35,496.74 434.15,498.15 434.96,499.24 435.76,499.11 436.56,495.51 437.37,498.02 438.18,498.7 438.98,498.41 439.79,501.39 440.59,497.61 441.4,499.53 442.2,500.3 443.01,498.62 443.81,494.77 444.62,500.22 445.42,498.91 446.23,500.65 447.03,497.5 447.84,495.78 448.64,494.75 449.45,495.74 450.25,499.53 451.06,498.5 451.86,500.91 452.67,500.65 453.47,503.33 454.28,503.58 455.08,506.84 455.89,508.6 456.69,508.17 457.5,509.07 458.3,509.35 459.11,507.25 459.91,506.33 460.72,509.36 461.52,511.61 462.33,514.13 463.13,516.3 463.94,518.46 464.74,522.93 465.55,521.48 466.35,526.04 467.16,523.28 467.96,522.16 468.77,524.28 469.57,520.12 470.38,522.28 471.18,518.14 471.99,519.73 472.79,521.61 473.6,518.26 474.4,515.42 475.21,518.03 476.01,517.22 476.82,520.02 477.62,517.6 478.43,522.9 479.23,524.92 480.04,523.39 480.84,522.83 481.65,522.8 482.45,518.44 483.26,518.68 484.06,519.74 484.87,522.13 485.67,518.87 486.48,520.43 487.28,517.76 488.09,519.87 488.89,518.16 489.7,517.22 490.5,518.57 491.31,515.97 492.11,517.17 492.92,518.92 493.72,515.14 494.53,516.46 495.33,518.46 496.14,519.67 496.94,520.06 497.75,522.9 498.55,519.61 499.36,523.72 500.16,523.62 500.97,522.98 501.77,522.98 502.58,522.18 503.38,519.64 504.19,518.45 504.99,519.07 505.8,520.69 506.6,521.4 507.41,522.85 508.21,516.32 509.02,517.74 509.82,519.12 510.63,519.46 511.43,520.56 512.24,518.21 513.04,517.77 513.85,521.17 514.65,520.02 515.46,516.63 516.26,519.01 517.07,522.45 517.87,519.83 518.67,516 519.48,520.41 520.29,513.47 521.09,512.96 521.89,514.24 522.7,513.52 523.5,515.09 524.31,514.05 525.12,513.7 525.92,511.65 526.73,510.08 527.53,507.91 528.34,506.81 529.14,506.61 529.95,504.83 530.75,504.49 531.56,505.63 532.36,509.08 533.17,506.66 533.97,504.58 534.77,505.98 535.58,506.19 536.38,503.39 537.19,501.82 538,501.51 538.8,498.15 539.61,503.41 540.41,505.05 541.22,501.88 542.02,505.81 542.83,505.82 543.63,508.09 544.44,509.35 545.24,509.32 546.05,510.02 546.85,511.3 547.66,516.22 548.46,514.53 549.26,515.2 550.07,511.38 550.88,510.93 551.68,511 552.49,511.03 553.29,514.06 554.1,512.09 554.9,513.65 555.71,516.03 556.51,515.8 557.32,516.09 558.12,514.38 558.93,512.62 559.73,511.92 560.54,511.68 561.34,511.02 562.14,510.94 562.95,508.97 563.75,505.42 564.56,507.37 565.37,508.04 566.17,505.67 566.98,504.95 567.78,504.51 568.59,504.58 569.39,502.35 570.2,500.85 571,502.94 571.81,499.4 572.61,500.24 573.42,497.56 574.22,498.31 575.03,500.48 575.83,501.25 576.63,506.06 577.44,503.71 578.25,506.69 579.05,505.09 579.86,498.71 580.66,501.08 581.47,501.7 582.27,501.91 583.08,500.35 583.88,501.73 584.69,502.87 585.49,501.09 586.3,502.74 587.1,503.26 587.91,503.98 588.71,501.72 589.51,500.68 590.32,502.46 591.12,500.18 591.93,503.47 592.74,506.75 593.54,507.02 594.35,506.6 595.15,507.88 595.96,506.51 596.76,504.02 597.57,505.68 598.37,507.87 599.18,510.11 599.98,506.76 600.79,501.68 601.59,498.15 602.39,495.68 603.2,491.9 604,492.12 604.81,489.25 605.62,489.98 606.42,485.91 607.23,484.17 608.03,483.99 608.84,482.91 609.64,484.07 610.45,485.56 611.25,482.88 612.06,483.65 612.86,487.76 613.67,486.16 614.47,487.07 615.28,486.08 616.08,489.31 616.88,484.21 617.69,483.17 618.5,484.88 619.3,486.07 620.11,488.32 620.91,491.29 621.72,493.41 622.52,492.21 623.33,487.49 624.13,489.59 624.94,485.73 625.74,486.26 626.55,482.84 627.35,483.05 628.16,480.12 628.96,474.9 629.76,474.39 630.57,473.71 631.38,472.69 632.18,471.45 632.99,469.61 633.79,471.02 634.6,467.61 635.4,469.36 636.21,469.4 637.01,469.28 637.82,468.77 638.62,471.36 639.43,468.46 640.23,466.71 641.04,464.34 641.84,458.39 642.64,454.43 643.45,459.58 644.25,461.09 645.06,465.91 645.87,467.46 646.67,465.19 647.48,464.23 648.28,457.49 649.09,458.67 649.89,453.95 650.7,456.32 651.5,453.09 652.31,453 653.11,454.71 653.92,453.28 654.72,453.28 655.53,452.88 656.33,448.52 657.13,443.57 657.94,447.04 658.75,454.68 659.55,459.15 660.36,461.84 661.16,458.7 661.97,458.34 662.77,458.37 663.58,456.65 664.38,457.11 665.19,451.99 665.99,454.36 666.8,453.94 667.6,449.62 668.41,452.38 669.21,449.4 670.01,453.72 670.82,453.31 671.62,451.46 672.43,450.57 673.24,448.35 674.04,449.98 674.85,448.73 675.65,451.52 676.46,451.19 677.26,456.79 678.07,455.27 678.87,457.36 679.68,463.12 680.48,464.46 681.29,464.74 682.09,460.11 682.9,461.36 683.7,454.47 684.5,452.7 685.31,451.68 686.12,455.04 686.92,456.41 687.73,457.88 688.53,458.59 689.34,457.45 690.14,461.24 690.95,458.37 691.75,457.33 692.56,456.34 693.36,456.39 694.17,454.33 694.97,454.68 695.78,448.36 696.58,451.46 697.38,449.92 698.19,451 699,448.32 699.8,445.57 700.61,449.98 701.41,449.08 702.22,445.04 703.02,445.93 703.83,446.76 704.63,445.43 705.44,444.73 706.24,443.06 707.05,442.9 707.85,439.2 708.66,438.82 709.46,438.81 710.26,436.32 711.07,436.96 711.88,436.73 712.68,436.11 713.49,436.08 714.29,435.01 715.1,433.98 715.9,430.58 716.71,431.67 717.51,429.39 718.32,428.79 719.12,430.52 719.93,423.59 720.73,426.51 721.54,421.8 722.34,427.12 723.15,427.26 723.95,426.61 724.75,428.45 725.56,430.4 726.37,430.36 727.17,432.42 727.98,435.31 728.78,429.73 729.59,432.77 730.39,435.68 731.2,437.38 732,432.51 732.81,434.47 733.61,432.57 734.42,429.74 735.22,424.85 736.03,427.82 736.83,431.82 737.63,438.47 738.44,444.91 739.25,439.36 740.05,435.2 740.86,432.88 741.66,432.23 742.47,434.59 743.27,438.77 744.08,440.97 744.88,444.23 745.69,449.33 746.49,448.52 747.3,450.7 748.1,452.62 748.91,453.22 749.71,453.35 750.52,454.16 751.32,452.72 752.12,454.62 752.93,449.52 753.74,454.88 754.54,451.82 755.35,452.13 756.15,449.07 756.96,449.98 757.76,448.34 758.57,443.73 759.37,445.02 760.18,449.11 760.98,452.75 761.79,456.31 762.59,458.98 763.4,458.34 764.2,458.97 765,457.63 765.81,455.86 766.62,454.27 767.42,451.51 768.23,446.42 769.03,444.79 769.84,445.85 770.64,448.9 771.45,447.15 772.25,451.61 773.06,453.4 773.86,452.54 774.67,454.29 775.47,450.23 776.28,450.22 777.08,453.56 777.88,449.71 778.69,447.9 779.5,447.05 780.3,446.05 781.11,444.65 781.91,442.56 782.72,444.63 783.52,443.96 784.33,443.13 785.13,448.01 785.94,448.27 786.74,449.42 787.55,448.66 788.35,448.78 789.16,447.02 789.96,443.38 790.77,442.17 791.57,445.64 792.38,447.01 793.18,448.94 793.99,446.75 794.79,447.75 795.6,447.96 796.4,447.62 797.21,445.8 798.01,443.46 798.82,442.08 799.62,439.81 800.43,442.86 801.23,445.58 802.04,445.29 802.84,443.59 803.65,446.92 804.45,446.67 805.25,444.62 806.06,445.68 806.87,448.44 807.67,447.25 808.48,446.06 809.28,448.48 810.09,445.62 810.89,443 811.7,444.42 812.5,446.25 813.31,450.76 814.11,450.73 814.92,448.69 815.72,450.94 816.53,449.24 817.33,443.34 818.14,446.01 818.94,446.97 819.75,444.86 820.55,446.31 821.36,448.38 822.16,446.57 822.97,448.94 823.77,447.71 824.58,450.68 825.38,449.81 826.19,453.35 826.99,457.22 827.8,457.59 828.6,453.91 829.41,450.74 830.21,449.66 831.02,448.47 831.82,444.45 832.62,445.97 833.43,443.3 834.24,445.24 835.04,443.47 835.85,442.52 836.65,443.57 837.46,441.25 838.26,441.21 839.07,440.08 839.87,447.28 840.68,450.27 841.48,452.1 842.29,452.86 843.09,451.51 843.9,449.42 844.7,452 845.5,451.8 846.31,449.7 847.12,446.63 847.92,445.34 848.73,449.67 849.53,447.86 850.34,448.08 851.14,449.74 851.95,453.25 852.75,451 853.56,450.53 854.36,449.91 855.17,450.94 855.97,448.29 856.78,447.26 857.58,448.12 858.39,445.27 859.19,445.23 860,445.4 860.8,441.03 861.61,441.55 862.41,442.46 863.22,439.3 864.02,443.11 864.83,439.8 865.63,441.63 866.44,440.6 867.24,437.62 868.05,438.6 868.85,441.27 869.66,443.66 870.46,446.54 871.27,444.77 872.07,444.74 872.88,446.81 873.68,445.72 874.49,443.66 875.29,442.4 876.1,441.21 876.9,443.68 877.71,439.18 878.51,440.69 879.32,438.14 880.12,435.97 880.93,437.49 881.73,435.67 882.54,441.58 883.34,445.39 884.15,440.06 884.95,441.8 885.76,440.36 886.56,439.88 887.37,439.37 888.17,439.72 888.98,445.23 889.78,444.18 890.59,441.32 891.39,439.47 892.2,441.97 893,441.46 893.81,442.4 894.61,442.23 895.42,443.13 896.22,448.12 897.03,441.42 897.83,444.39 898.64,442.83 899.44,444.7 900.25,443.01 901.05,443.74 901.86,447.11 902.66,448.39 903.47,448.43 904.27,446.44 905.08,448.07 905.88,446.26 906.69,445.26 907.49,446.23 908.3,450.12 909.1,448.59 909.91,443.66 910.71,446.85 911.52,446.55 912.32,444.55 913.12,447.84 913.93,449.25 914.74,448.87 915.54,448.39 916.35,451.6 917.15,454.21 917.96,454.4 918.76,454.95 919.57,451.58 920.37,450.58 921.18,452.62 921.98,450.19 922.79,450.96 923.59,455.01 924.4,455.82 925.2,455.63 926.01,454.27 926.81,456.1 927.62,452.65 928.42,453.75 929.23,452.05 930.03,454.93 930.84,454.91 931.64,456.35 932.45,453.56 933.25,453.43 934.06,449.49 934.86,452.61 935.67,452.24 936.47,452.71 937.28,451.7 938.08,448.74 938.89,450.04 939.69,448.16 940.5,451 941.3,447.34 942.11,446.15 942.91,446.81 943.72,445.8 944.52,447.31 945.33,444.54 946.13,446.23 946.94,443.88 947.74,448.56 948.55,447.57 949.35,445.89 950.16,448.88 950.96,448.39 951.77,449.6 952.57,450.01 953.38,454.74 954.18,455.46 954.99,450.24 955.79,452.86 956.6,452.41 957.4,451.39 958.21,454.52 959.01,450.69 959.82,448.39 960.62,450.71 961.43,449.04 962.23,449.36 963.04,449.25 963.84,448.24 964.65,445.02 965.45,445.67 966.26,447.22 967.06,443.92 967.87,447.35 968.67,448 969.48,449.25"/>
<path d="M376.3 457.5V472.5" stroke="#f40000" stroke-width="1.6"/>
<path d="M971.6 361.6V534.7H5.9" fill="none" stroke="#d8d8d8" stroke-width="1.1"/>
<rect x="5" y="361.6" width="967.1" height="0.8" fill="#8e8e8e"/>
<text x="11.5" y="372.2" font-family="'Liberation Sans','Noto Sans CJK JP',sans-serif" font-size="9.6" fill="#e6e6e6" stroke="#e6e6e6" stroke-width="0.1">金</text>
<text x="89.9" y="372.2" text-anchor="middle" font-family="'Liberation Sans','Noto Sans CJK JP',sans-serif" font-size="10" fill="#e6e6e6" stroke="#e6e6e6" stroke-width="0.1">×</text>
<text x="124.2" y="372.2" text-anchor="middle" font-family="'Liberation Sans','Noto Sans CJK JP',sans-serif" font-size="9.6" fill="#e6e6e6" stroke="#e6e6e6" stroke-width="0.1">－</text>
<text x="134.7" y="372.2" font-family="'Liberation Sans','Noto Sans CJK JP',sans-serif" font-size="9.6" fill="#e6e6e6" stroke="#e6e6e6" stroke-width="0.1">白金</text>
<text x="217.3" y="372.2" text-anchor="middle" font-family="'Liberation Sans','Noto Sans CJK JP',sans-serif" font-size="10" fill="#e6e6e6" stroke="#e6e6e6" stroke-width="0.1">×</text>
<text x="251.6" y="372.2" font-family="'Liberation Sans','Noto Sans CJK JP',sans-serif" font-size="9.6" fill="#e6e6e6" stroke="#e6e6e6" stroke-width="0.1">終値</text>
<text x="276.4" y="372.2" font-family="'Liberation Sans','Noto Sans CJK JP',sans-serif" font-size="9.6" fill="#e6e6e6" stroke="#e6e6e6" stroke-width="0.1">時刻</text>
<text style="will-change:transform" transform="scale(0.82,1)" x="11.04 34.94 40.91 46.89 52.87 58.84 70.79 76.77 82.74 88.72 94.7 100.67 118.6 124.57 130.55 136.52 142.5 160.43 196.28 202.26 208.23 214.21 220.18 232.13 238.11 244.09 250.06 256.04 273.96 279.94 285.91 291.89 297.87 363.6 369.57 375.55 381.52 387.5 393.48 405.43 411.4 417.38 423.35 429.33 435.3" y="371.9" text-anchor="middle" font-family="Liberation Sans, sans-serif" font-size="9.6"  fill="#e6e6e6" stroke="#e6e6e6" stroke-width="0.12">[26/1022,1151.00][26/108,8981.00]:06:0013,217</text>
<text style="will-change:transform" transform="scale(0.82,1)" x="852.5 858.48" y="531" text-anchor="middle" font-family="Liberation Sans, sans-serif" font-size="9.6"  fill="#d6d6d6" stroke="#d6d6d6" stroke-width="0.17">18</text>
<text style="will-change:transform" transform="scale(0.82,1)" x="15.06 21.04" y="542.3" text-anchor="middle" font-family="Liberation Sans, sans-serif" font-size="9.6"  fill="#d6d6d6" stroke="#d6d6d6" stroke-width="0.17">05</text>
<text style="will-change:transform" transform="scale(0.82,1)" x="37.87 43.84" y="542.3" text-anchor="middle" font-family="Liberation Sans, sans-serif" font-size="9.6" font-weight="bold" fill="#ffffff" stroke="#ffffff" stroke-width="0.17">06</text>
<text style="will-change:transform" transform="scale(0.82,1)" x="69.02 75" y="542.3" text-anchor="middle" font-family="Liberation Sans, sans-serif" font-size="9.6"  fill="#d6d6d6" stroke="#d6d6d6" stroke-width="0.17">09</text>
<text style="will-change:transform" transform="scale(0.82,1)" x="127.26 133.23" y="542.3" text-anchor="middle" font-family="Liberation Sans, sans-serif" font-size="9.6"  fill="#d6d6d6" stroke="#d6d6d6" stroke-width="0.17">10</text>
<text style="will-change:transform" transform="scale(0.82,1)" x="186.4 192.38" y="542.3" text-anchor="middle" font-family="Liberation Sans, sans-serif" font-size="9.6"  fill="#d6d6d6" stroke="#d6d6d6" stroke-width="0.17">11</text>
<text style="will-change:transform" transform="scale(0.82,1)" x="245.24 251.22" y="542.3" text-anchor="middle" font-family="Liberation Sans, sans-serif" font-size="9.6"  fill="#d6d6d6" stroke="#d6d6d6" stroke-width="0.17">12</text>
<text style="will-change:transform" transform="scale(0.82,1)" x="303.78 309.76" y="542.3" text-anchor="middle" font-family="Liberation Sans, sans-serif" font-size="9.6"  fill="#d6d6d6" stroke="#d6d6d6" stroke-width="0.17">13</text>
<text style="will-change:transform" transform="scale(0.82,1)" x="363.23 369.21" y="542.3" text-anchor="middle" font-family="Liberation Sans, sans-serif" font-size="9.6"  fill="#d6d6d6" stroke="#d6d6d6" stroke-width="0.17">14</text>
<text style="will-change:transform" transform="scale(0.82,1)" x="421.77 427.74" y="542.3" text-anchor="middle" font-family="Liberation Sans, sans-serif" font-size="9.6"  fill="#d6d6d6" stroke="#d6d6d6" stroke-width="0.17">15</text>
<text style="will-change:transform" transform="scale(0.82,1)" x="462.32 468.29" y="542.3" text-anchor="middle" font-family="Liberation Sans, sans-serif" font-size="9.6"  fill="#d6d6d6" stroke="#d6d6d6" stroke-width="0.17">17</text>
<text style="will-change:transform" transform="scale(0.82,1)" x="521.16 527.13" y="542.3" text-anchor="middle" font-family="Liberation Sans, sans-serif" font-size="9.6"  fill="#d6d6d6" stroke="#d6d6d6" stroke-width="0.17">18</text>
<text style="will-change:transform" transform="scale(0.82,1)" x="580.3 586.28" y="542.3" text-anchor="middle" font-family="Liberation Sans, sans-serif" font-size="9.6"  fill="#d6d6d6" stroke="#d6d6d6" stroke-width="0.17">19</text>
<text style="will-change:transform" transform="scale(0.82,1)" x="634.57 640.55" y="542.3" text-anchor="middle" font-family="Liberation Sans, sans-serif" font-size="9.6"  fill="#d6d6d6" stroke="#d6d6d6" stroke-width="0.17">20</text>
<text style="will-change:transform" transform="scale(0.82,1)" x="681.83 687.8" y="542.3" text-anchor="middle" font-family="Liberation Sans, sans-serif" font-size="9.6"  fill="#d6d6d6" stroke="#d6d6d6" stroke-width="0.17">21</text>
<text style="will-change:transform" transform="scale(0.82,1)" x="733.66 739.63" y="542.3" text-anchor="middle" font-family="Liberation Sans, sans-serif" font-size="9.6"  fill="#d6d6d6" stroke="#d6d6d6" stroke-width="0.17">22</text>
<text style="will-change:transform" transform="scale(0.82,1)" x="792.5 798.48" y="542.3" text-anchor="middle" font-family="Liberation Sans, sans-serif" font-size="9.6"  fill="#d6d6d6" stroke="#d6d6d6" stroke-width="0.17">23</text>
<text style="will-change:transform" transform="scale(0.82,1)" x="851.65 857.62" y="542.3" text-anchor="middle" font-family="Liberation Sans, sans-serif" font-size="9.6"  fill="#d6d6d6" stroke="#d6d6d6" stroke-width="0.17">00</text>
<text style="will-change:transform" transform="scale(0.82,1)" x="910.49 916.46" y="542.3" text-anchor="middle" font-family="Liberation Sans, sans-serif" font-size="9.6"  fill="#d6d6d6" stroke="#d6d6d6" stroke-width="0.17">01</text>
<text style="will-change:transform" transform="scale(0.82,1)" x="969.94 975.91" y="542.3" text-anchor="middle" font-family="Liberation Sans, sans-serif" font-size="9.6"  fill="#d6d6d6" stroke="#d6d6d6" stroke-width="0.17">02</text>
<text style="will-change:transform" transform="scale(0.82,1)" x="1024.82 1030.79" y="542.3" text-anchor="middle" font-family="Liberation Sans, sans-serif" font-size="9.6"  fill="#d6d6d6" stroke="#d6d6d6" stroke-width="0.17">03</text>
<text style="will-change:transform" transform="scale(0.82,1)" x="1082.74 1088.72" y="542.3" text-anchor="middle" font-family="Liberation Sans, sans-serif" font-size="9.6"  fill="#d6d6d6" stroke="#d6d6d6" stroke-width="0.17">04</text>
<text style="will-change:transform" transform="scale(0.82,1)" x="1136.1 1142.07" y="542.3" text-anchor="middle" font-family="Liberation Sans, sans-serif" font-size="9.6"  fill="#d6d6d6" stroke="#d6d6d6" stroke-width="0.17">05</text>
<text style="will-change:transform" transform="scale(0.82,1)" x="1169.57 1175.55" y="542.3" text-anchor="middle" font-family="Liberation Sans, sans-serif" font-size="9.6"  fill="#d6d6d6" stroke="#d6d6d6" stroke-width="0.17">06</text>
<text style="will-change:transform" transform="scale(0.82,1)" x="1189.21 1195.18 1201.16 1207.13 1213.11 1219.09" y="369.45" text-anchor="middle" font-family="Liberation Sans, sans-serif" font-size="9.6"  fill="#c4c4c4" stroke="#c4c4c4" stroke-width="0.17">13,400</text>
<text style="will-change:transform" transform="scale(0.82,1)" x="1189.21 1195.18 1201.16 1207.13 1213.11 1219.09" y="411.35" text-anchor="middle" font-family="Liberation Sans, sans-serif" font-size="9.6"  fill="#c4c4c4" stroke="#c4c4c4" stroke-width="0.17">13,300</text>
<text style="will-change:transform" transform="scale(0.82,1)" x="1189.21 1195.18 1201.16 1207.13 1213.11 1219.09" y="495.85" text-anchor="middle" font-family="Liberation Sans, sans-serif" font-size="9.6"  fill="#c4c4c4" stroke="#c4c4c4" stroke-width="0.17">13,100</text>
<text style="will-change:transform" transform="scale(0.82,1)" x="1189.21 1195.18 1201.16 1207.13 1213.11 1219.09" y="537.95" text-anchor="middle" font-family="Liberation Sans, sans-serif" font-size="9.6"  fill="#c4c4c4" stroke="#c4c4c4" stroke-width="0.17">13,000</text>
<rect x="972.1" y="441.2" width="47.2" height="15.9" fill="#dedede"/>
<text style="will-change:transform" transform="scale(0.84,1)" x="1170.18 1176.25 1182.32 1188.39 1194.46 1200.54" y="451.8" text-anchor="middle" font-family="Liberation Sans, sans-serif" font-size="10" font-weight="bold" fill="#000" stroke="#000" stroke-width="0.18">13,217</text>
</g>
</svg>
</body></html>
